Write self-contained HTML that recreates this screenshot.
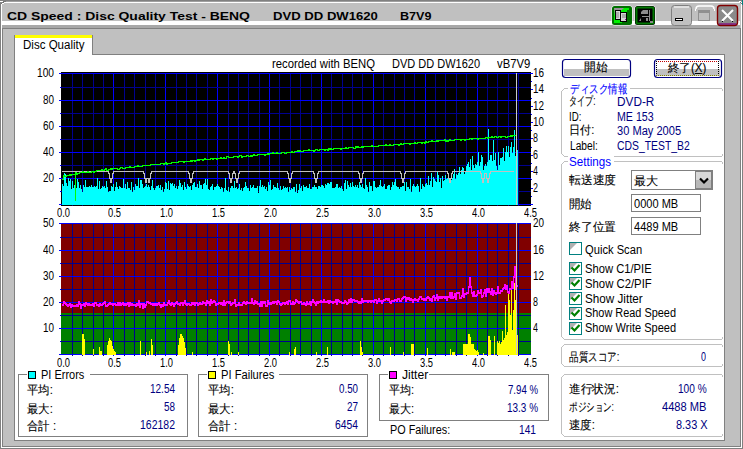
<!DOCTYPE html>
<html><head><meta charset="utf-8"><style>
html,body{margin:0;padding:0;width:743px;height:449px;overflow:hidden;background:#c0c0c0}
#s{position:absolute;left:0;top:0}
.j{-webkit-text-stroke:0.12px}
.t{position:absolute;white-space:pre;line-height:1;font-family:"Liberation Sans",sans-serif;transform-origin:0 0}
</style></head><body>
<svg id="s" width="743" height="449" viewBox="0 0 743 449" shape-rendering="crispEdges">
<rect x="0" y="0" width="743" height="449" fill="#c0c0c0"/><rect x="0" y="0" width="743" height="1" fill="#808080"/><rect x="0" y="1" width="743" height="1" fill="#a0a0a0"/><rect x="3" y="2" width="737" height="1" fill="#ffffff"/><rect x="0" y="0" width="1" height="449" fill="#808080"/><rect x="1" y="2" width="1" height="447" fill="#ffffff"/><rect x="742" y="0" width="1" height="449" fill="#808080"/><rect x="741" y="2" width="1" height="446" fill="#ffffff"/><rect x="0" y="448" width="743" height="1" fill="#808080"/><rect x="1" y="447" width="741" height="1" fill="#ffffff"/><rect x="0" y="1" width="3" height="1" fill="#ffffff"/><rect x="3" y="1" width="3" height="1" fill="#777777"/><rect x="0" y="2" width="2" height="1" fill="#888888"/><rect x="2" y="2" width="2" height="1" fill="#777777"/><rect x="4" y="2" width="3" height="1" fill="#ffffff"/><rect x="1" y="3" width="1" height="1" fill="#777777"/><rect x="2" y="3" width="2" height="1" fill="#ffffff"/><rect x="742" y="0" width="1" height="5" fill="#008080"/><rect x="739" y="1" width="2" height="1" fill="#ffffff"/><rect x="740" y="2" width="1" height="1" fill="#777777"/><rect x="741" y="3" width="1" height="1" fill="#777777"/><rect x="2" y="21" width="738" height="4" fill="#ffffff"/><rect x="2" y="25" width="738" height="3" fill="#a8a8a8"/><rect x="2" y="28" width="738" height="1" fill="#808080"/><rect x="2" y="28" width="1" height="419" fill="#808080"/><rect x="740" y="28" width="1" height="419" fill="#808080"/><rect x="2" y="446" width="739" height="1" fill="#808080"/><rect x="14" y="54" width="711" height="387" fill="#808080"/><rect x="15" y="55" width="709" height="385" fill="#ffffff"/><rect x="14" y="35" width="79" height="20" fill="#808080"/><rect x="15" y="38" width="77" height="17" fill="#ffffff"/><rect x="15" y="35" width="77" height="3" fill="#ffff00"/><rect x="61" y="72" width="470" height="134" fill="#000000"/><rect x="72" y="73" width="1" height="133" fill="#000090"/><rect x="82" y="73" width="1" height="133" fill="#000090"/><rect x="93" y="73" width="1" height="133" fill="#000090"/><rect x="103" y="73" width="1" height="133" fill="#000090"/><rect x="113" y="73" width="1" height="133" fill="#0000ff"/><rect x="124" y="73" width="1" height="133" fill="#000090"/><rect x="134" y="73" width="1" height="133" fill="#000090"/><rect x="145" y="73" width="1" height="133" fill="#000090"/><rect x="155" y="73" width="1" height="133" fill="#000090"/><rect x="165" y="73" width="1" height="133" fill="#0000ff"/><rect x="176" y="73" width="1" height="133" fill="#000090"/><rect x="186" y="73" width="1" height="133" fill="#000090"/><rect x="196" y="73" width="1" height="133" fill="#000090"/><rect x="207" y="73" width="1" height="133" fill="#000090"/><rect x="217" y="73" width="1" height="133" fill="#0000ff"/><rect x="228" y="73" width="1" height="133" fill="#000090"/><rect x="238" y="73" width="1" height="133" fill="#000090"/><rect x="248" y="73" width="1" height="133" fill="#000090"/><rect x="259" y="73" width="1" height="133" fill="#000090"/><rect x="269" y="73" width="1" height="133" fill="#0000ff"/><rect x="279" y="73" width="1" height="133" fill="#000090"/><rect x="290" y="73" width="1" height="133" fill="#000090"/><rect x="300" y="73" width="1" height="133" fill="#000090"/><rect x="311" y="73" width="1" height="133" fill="#000090"/><rect x="321" y="73" width="1" height="133" fill="#0000ff"/><rect x="331" y="73" width="1" height="133" fill="#000090"/><rect x="342" y="73" width="1" height="133" fill="#000090"/><rect x="352" y="73" width="1" height="133" fill="#000090"/><rect x="362" y="73" width="1" height="133" fill="#000090"/><rect x="373" y="73" width="1" height="133" fill="#0000ff"/><rect x="383" y="73" width="1" height="133" fill="#000090"/><rect x="394" y="73" width="1" height="133" fill="#000090"/><rect x="404" y="73" width="1" height="133" fill="#000090"/><rect x="414" y="73" width="1" height="133" fill="#000090"/><rect x="425" y="73" width="1" height="133" fill="#0000ff"/><rect x="435" y="73" width="1" height="133" fill="#000090"/><rect x="445" y="73" width="1" height="133" fill="#000090"/><rect x="456" y="73" width="1" height="133" fill="#000090"/><rect x="466" y="73" width="1" height="133" fill="#000090"/><rect x="477" y="73" width="1" height="133" fill="#0000ff"/><rect x="487" y="73" width="1" height="133" fill="#000090"/><rect x="497" y="73" width="1" height="133" fill="#000090"/><rect x="508" y="73" width="1" height="133" fill="#000090"/><rect x="518" y="73" width="1" height="133" fill="#000090"/><rect x="61" y="73" width="470" height="1" fill="#0000ff"/><rect x="61" y="87" width="470" height="1" fill="#000090"/><rect x="61" y="100" width="470" height="1" fill="#0000ff"/><rect x="61" y="113" width="470" height="1" fill="#000090"/><rect x="61" y="126" width="470" height="1" fill="#0000ff"/><rect x="61" y="139" width="470" height="1" fill="#000090"/><rect x="61" y="152" width="470" height="1" fill="#0000ff"/><rect x="61" y="165" width="470" height="1" fill="#000090"/><rect x="61" y="178" width="470" height="1" fill="#0000ff"/><rect x="61" y="191" width="470" height="1" fill="#000090"/><rect x="61" y="204" width="470" height="1" fill="#0000ff"/><rect x="59" y="73" width="2" height="1" fill="#0000ff"/><rect x="60" y="87" width="1" height="1" fill="#0000ff"/><rect x="59" y="100" width="2" height="1" fill="#0000ff"/><rect x="60" y="113" width="1" height="1" fill="#0000ff"/><rect x="59" y="126" width="2" height="1" fill="#0000ff"/><rect x="60" y="139" width="1" height="1" fill="#0000ff"/><rect x="59" y="152" width="2" height="1" fill="#0000ff"/><rect x="60" y="165" width="1" height="1" fill="#0000ff"/><rect x="59" y="178" width="2" height="1" fill="#0000ff"/><rect x="60" y="191" width="1" height="1" fill="#0000ff"/><rect x="59" y="204" width="2" height="1" fill="#0000ff"/><rect x="531" y="204" width="2" height="1" fill="#0000ff"/><rect x="531" y="196" width="1" height="1" fill="#0000ff"/><rect x="531" y="188" width="2" height="1" fill="#0000ff"/><rect x="531" y="179" width="1" height="1" fill="#0000ff"/><rect x="531" y="171" width="2" height="1" fill="#0000ff"/><rect x="531" y="163" width="1" height="1" fill="#0000ff"/><rect x="531" y="155" width="2" height="1" fill="#0000ff"/><rect x="531" y="147" width="1" height="1" fill="#0000ff"/><rect x="531" y="138" width="2" height="1" fill="#0000ff"/><rect x="531" y="130" width="1" height="1" fill="#0000ff"/><rect x="531" y="122" width="2" height="1" fill="#0000ff"/><rect x="531" y="114" width="1" height="1" fill="#0000ff"/><rect x="531" y="106" width="2" height="1" fill="#0000ff"/><rect x="531" y="98" width="1" height="1" fill="#0000ff"/><rect x="531" y="89" width="2" height="1" fill="#0000ff"/><rect x="531" y="81" width="1" height="1" fill="#0000ff"/><rect x="531" y="73" width="2" height="1" fill="#0000ff"/><rect x="62" y="184" width="1" height="21" fill="#00ffff"/><rect x="63" y="186" width="1" height="19" fill="#00ffff"/><rect x="64" y="173" width="1" height="32" fill="#00ffff"/><rect x="65" y="174" width="1" height="31" fill="#00ffff"/><rect x="66" y="183" width="1" height="22" fill="#00ffff"/><rect x="67" y="186" width="1" height="19" fill="#00ffff"/><rect x="68" y="178" width="1" height="27" fill="#00ffff"/><rect x="69" y="181" width="1" height="24" fill="#00ffff"/><rect x="70" y="179" width="1" height="26" fill="#00ffff"/><rect x="71" y="189" width="1" height="16" fill="#00ffff"/><rect x="72" y="181" width="1" height="24" fill="#00ffff"/><rect x="73" y="188" width="1" height="17" fill="#00ffff"/><rect x="74" y="185" width="1" height="20" fill="#00ffff"/><rect x="75" y="189" width="1" height="16" fill="#00ffff"/><rect x="76" y="188" width="1" height="17" fill="#00ffff"/><rect x="77" y="179" width="1" height="26" fill="#00ffff"/><rect x="78" y="182" width="1" height="23" fill="#00ffff"/><rect x="79" y="188" width="1" height="17" fill="#00ffff"/><rect x="80" y="185" width="1" height="20" fill="#00ffff"/><rect x="81" y="189" width="1" height="16" fill="#00ffff"/><rect x="82" y="192" width="1" height="13" fill="#00ffff"/><rect x="83" y="185" width="1" height="20" fill="#00ffff"/><rect x="84" y="187" width="1" height="18" fill="#00ffff"/><rect x="85" y="180" width="1" height="25" fill="#00ffff"/><rect x="86" y="187" width="1" height="18" fill="#00ffff"/><rect x="87" y="187" width="1" height="18" fill="#00ffff"/><rect x="88" y="187" width="1" height="18" fill="#00ffff"/><rect x="89" y="186" width="1" height="19" fill="#00ffff"/><rect x="90" y="187" width="1" height="18" fill="#00ffff"/><rect x="91" y="185" width="1" height="20" fill="#00ffff"/><rect x="92" y="187" width="1" height="18" fill="#00ffff"/><rect x="93" y="187" width="1" height="18" fill="#00ffff"/><rect x="94" y="186" width="1" height="19" fill="#00ffff"/><rect x="95" y="187" width="1" height="18" fill="#00ffff"/><rect x="96" y="186" width="1" height="19" fill="#00ffff"/><rect x="97" y="178" width="1" height="27" fill="#00ffff"/><rect x="98" y="189" width="1" height="16" fill="#00ffff"/><rect x="99" y="181" width="1" height="24" fill="#00ffff"/><rect x="100" y="189" width="1" height="16" fill="#00ffff"/><rect x="101" y="188" width="1" height="17" fill="#00ffff"/><rect x="102" y="186" width="1" height="19" fill="#00ffff"/><rect x="103" y="187" width="1" height="18" fill="#00ffff"/><rect x="104" y="186" width="1" height="19" fill="#00ffff"/><rect x="105" y="188" width="1" height="17" fill="#00ffff"/><rect x="106" y="181" width="1" height="24" fill="#00ffff"/><rect x="107" y="187" width="1" height="18" fill="#00ffff"/><rect x="108" y="192" width="1" height="13" fill="#00ffff"/><rect x="109" y="191" width="1" height="14" fill="#00ffff"/><rect x="110" y="191" width="1" height="14" fill="#00ffff"/><rect x="111" y="186" width="1" height="19" fill="#00ffff"/><rect x="112" y="187" width="1" height="18" fill="#00ffff"/><rect x="113" y="184" width="1" height="21" fill="#00ffff"/><rect x="114" y="191" width="1" height="14" fill="#00ffff"/><rect x="115" y="187" width="1" height="18" fill="#00ffff"/><rect x="116" y="182" width="1" height="23" fill="#00ffff"/><rect x="117" y="187" width="1" height="18" fill="#00ffff"/><rect x="118" y="189" width="1" height="16" fill="#00ffff"/><rect x="119" y="186" width="1" height="19" fill="#00ffff"/><rect x="120" y="187" width="1" height="18" fill="#00ffff"/><rect x="121" y="188" width="1" height="17" fill="#00ffff"/><rect x="122" y="188" width="1" height="17" fill="#00ffff"/><rect x="123" y="179" width="1" height="26" fill="#00ffff"/><rect x="124" y="188" width="1" height="17" fill="#00ffff"/><rect x="125" y="184" width="1" height="21" fill="#00ffff"/><rect x="126" y="189" width="1" height="16" fill="#00ffff"/><rect x="127" y="182" width="1" height="23" fill="#00ffff"/><rect x="128" y="188" width="1" height="17" fill="#00ffff"/><rect x="129" y="188" width="1" height="17" fill="#00ffff"/><rect x="130" y="190" width="1" height="15" fill="#00ffff"/><rect x="131" y="182" width="1" height="23" fill="#00ffff"/><rect x="132" y="192" width="1" height="13" fill="#00ffff"/><rect x="133" y="187" width="1" height="18" fill="#00ffff"/><rect x="134" y="190" width="1" height="15" fill="#00ffff"/><rect x="135" y="184" width="1" height="21" fill="#00ffff"/><rect x="136" y="186" width="1" height="19" fill="#00ffff"/><rect x="137" y="186" width="1" height="19" fill="#00ffff"/><rect x="138" y="178" width="1" height="27" fill="#00ffff"/><rect x="139" y="188" width="1" height="17" fill="#00ffff"/><rect x="140" y="180" width="1" height="25" fill="#00ffff"/><rect x="141" y="180" width="1" height="25" fill="#00ffff"/><rect x="142" y="184" width="1" height="21" fill="#00ffff"/><rect x="143" y="188" width="1" height="17" fill="#00ffff"/><rect x="144" y="187" width="1" height="18" fill="#00ffff"/><rect x="145" y="186" width="1" height="19" fill="#00ffff"/><rect x="146" y="184" width="1" height="21" fill="#00ffff"/><rect x="147" y="187" width="1" height="18" fill="#00ffff"/><rect x="148" y="185" width="1" height="20" fill="#00ffff"/><rect x="149" y="187" width="1" height="18" fill="#00ffff"/><rect x="150" y="190" width="1" height="15" fill="#00ffff"/><rect x="151" y="186" width="1" height="19" fill="#00ffff"/><rect x="152" y="180" width="1" height="25" fill="#00ffff"/><rect x="153" y="188" width="1" height="17" fill="#00ffff"/><rect x="154" y="190" width="1" height="15" fill="#00ffff"/><rect x="155" y="188" width="1" height="17" fill="#00ffff"/><rect x="156" y="186" width="1" height="19" fill="#00ffff"/><rect x="157" y="186" width="1" height="19" fill="#00ffff"/><rect x="158" y="185" width="1" height="20" fill="#00ffff"/><rect x="159" y="188" width="1" height="17" fill="#00ffff"/><rect x="160" y="185" width="1" height="20" fill="#00ffff"/><rect x="161" y="190" width="1" height="15" fill="#00ffff"/><rect x="162" y="187" width="1" height="18" fill="#00ffff"/><rect x="163" y="192" width="1" height="13" fill="#00ffff"/><rect x="164" y="189" width="1" height="16" fill="#00ffff"/><rect x="165" y="182" width="1" height="23" fill="#00ffff"/><rect x="166" y="183" width="1" height="22" fill="#00ffff"/><rect x="167" y="189" width="1" height="16" fill="#00ffff"/><rect x="168" y="181" width="1" height="24" fill="#00ffff"/><rect x="169" y="190" width="1" height="15" fill="#00ffff"/><rect x="170" y="183" width="1" height="22" fill="#00ffff"/><rect x="171" y="184" width="1" height="21" fill="#00ffff"/><rect x="172" y="183" width="1" height="22" fill="#00ffff"/><rect x="173" y="186" width="1" height="19" fill="#00ffff"/><rect x="174" y="184" width="1" height="21" fill="#00ffff"/><rect x="175" y="188" width="1" height="17" fill="#00ffff"/><rect x="176" y="186" width="1" height="19" fill="#00ffff"/><rect x="177" y="189" width="1" height="16" fill="#00ffff"/><rect x="178" y="186" width="1" height="19" fill="#00ffff"/><rect x="179" y="180" width="1" height="25" fill="#00ffff"/><rect x="180" y="183" width="1" height="22" fill="#00ffff"/><rect x="181" y="187" width="1" height="18" fill="#00ffff"/><rect x="182" y="185" width="1" height="20" fill="#00ffff"/><rect x="183" y="190" width="1" height="15" fill="#00ffff"/><rect x="184" y="182" width="1" height="23" fill="#00ffff"/><rect x="185" y="187" width="1" height="18" fill="#00ffff"/><rect x="186" y="189" width="1" height="16" fill="#00ffff"/><rect x="187" y="184" width="1" height="21" fill="#00ffff"/><rect x="188" y="186" width="1" height="19" fill="#00ffff"/><rect x="189" y="187" width="1" height="18" fill="#00ffff"/><rect x="190" y="186" width="1" height="19" fill="#00ffff"/><rect x="191" y="190" width="1" height="15" fill="#00ffff"/><rect x="192" y="185" width="1" height="20" fill="#00ffff"/><rect x="193" y="183" width="1" height="22" fill="#00ffff"/><rect x="194" y="182" width="1" height="23" fill="#00ffff"/><rect x="195" y="187" width="1" height="18" fill="#00ffff"/><rect x="196" y="187" width="1" height="18" fill="#00ffff"/><rect x="197" y="184" width="1" height="21" fill="#00ffff"/><rect x="198" y="188" width="1" height="17" fill="#00ffff"/><rect x="199" y="181" width="1" height="24" fill="#00ffff"/><rect x="200" y="185" width="1" height="20" fill="#00ffff"/><rect x="201" y="185" width="1" height="20" fill="#00ffff"/><rect x="202" y="189" width="1" height="16" fill="#00ffff"/><rect x="203" y="184" width="1" height="21" fill="#00ffff"/><rect x="204" y="183" width="1" height="22" fill="#00ffff"/><rect x="205" y="179" width="1" height="26" fill="#00ffff"/><rect x="206" y="185" width="1" height="20" fill="#00ffff"/><rect x="207" y="179" width="1" height="26" fill="#00ffff"/><rect x="208" y="189" width="1" height="16" fill="#00ffff"/><rect x="209" y="190" width="1" height="15" fill="#00ffff"/><rect x="210" y="187" width="1" height="18" fill="#00ffff"/><rect x="211" y="186" width="1" height="19" fill="#00ffff"/><rect x="212" y="184" width="1" height="21" fill="#00ffff"/><rect x="213" y="190" width="1" height="15" fill="#00ffff"/><rect x="214" y="187" width="1" height="18" fill="#00ffff"/><rect x="215" y="187" width="1" height="18" fill="#00ffff"/><rect x="216" y="186" width="1" height="19" fill="#00ffff"/><rect x="217" y="184" width="1" height="21" fill="#00ffff"/><rect x="218" y="186" width="1" height="19" fill="#00ffff"/><rect x="219" y="187" width="1" height="18" fill="#00ffff"/><rect x="220" y="189" width="1" height="16" fill="#00ffff"/><rect x="221" y="187" width="1" height="18" fill="#00ffff"/><rect x="222" y="188" width="1" height="17" fill="#00ffff"/><rect x="223" y="192" width="1" height="13" fill="#00ffff"/><rect x="224" y="188" width="1" height="17" fill="#00ffff"/><rect x="225" y="178" width="1" height="27" fill="#00ffff"/><rect x="226" y="190" width="1" height="15" fill="#00ffff"/><rect x="227" y="191" width="1" height="14" fill="#00ffff"/><rect x="228" y="187" width="1" height="18" fill="#00ffff"/><rect x="229" y="192" width="1" height="13" fill="#00ffff"/><rect x="230" y="188" width="1" height="17" fill="#00ffff"/><rect x="231" y="186" width="1" height="19" fill="#00ffff"/><rect x="232" y="186" width="1" height="19" fill="#00ffff"/><rect x="233" y="188" width="1" height="17" fill="#00ffff"/><rect x="234" y="181" width="1" height="24" fill="#00ffff"/><rect x="235" y="188" width="1" height="17" fill="#00ffff"/><rect x="236" y="187" width="1" height="18" fill="#00ffff"/><rect x="237" y="189" width="1" height="16" fill="#00ffff"/><rect x="238" y="188" width="1" height="17" fill="#00ffff"/><rect x="239" y="184" width="1" height="21" fill="#00ffff"/><rect x="240" y="190" width="1" height="15" fill="#00ffff"/><rect x="241" y="188" width="1" height="17" fill="#00ffff"/><rect x="242" y="191" width="1" height="14" fill="#00ffff"/><rect x="243" y="188" width="1" height="17" fill="#00ffff"/><rect x="244" y="187" width="1" height="18" fill="#00ffff"/><rect x="245" y="182" width="1" height="23" fill="#00ffff"/><rect x="246" y="186" width="1" height="19" fill="#00ffff"/><rect x="247" y="188" width="1" height="17" fill="#00ffff"/><rect x="248" y="188" width="1" height="17" fill="#00ffff"/><rect x="249" y="191" width="1" height="14" fill="#00ffff"/><rect x="250" y="185" width="1" height="20" fill="#00ffff"/><rect x="251" y="188" width="1" height="17" fill="#00ffff"/><rect x="252" y="187" width="1" height="18" fill="#00ffff"/><rect x="253" y="185" width="1" height="20" fill="#00ffff"/><rect x="254" y="188" width="1" height="17" fill="#00ffff"/><rect x="255" y="188" width="1" height="17" fill="#00ffff"/><rect x="256" y="188" width="1" height="17" fill="#00ffff"/><rect x="257" y="186" width="1" height="19" fill="#00ffff"/><rect x="258" y="193" width="1" height="12" fill="#00ffff"/><rect x="259" y="186" width="1" height="19" fill="#00ffff"/><rect x="260" y="180" width="1" height="25" fill="#00ffff"/><rect x="261" y="187" width="1" height="18" fill="#00ffff"/><rect x="262" y="185" width="1" height="20" fill="#00ffff"/><rect x="263" y="187" width="1" height="18" fill="#00ffff"/><rect x="264" y="186" width="1" height="19" fill="#00ffff"/><rect x="265" y="189" width="1" height="16" fill="#00ffff"/><rect x="266" y="187" width="1" height="18" fill="#00ffff"/><rect x="267" y="191" width="1" height="14" fill="#00ffff"/><rect x="268" y="182" width="1" height="23" fill="#00ffff"/><rect x="269" y="185" width="1" height="20" fill="#00ffff"/><rect x="270" y="180" width="1" height="25" fill="#00ffff"/><rect x="271" y="190" width="1" height="15" fill="#00ffff"/><rect x="272" y="189" width="1" height="16" fill="#00ffff"/><rect x="273" y="185" width="1" height="20" fill="#00ffff"/><rect x="274" y="187" width="1" height="18" fill="#00ffff"/><rect x="275" y="187" width="1" height="18" fill="#00ffff"/><rect x="276" y="188" width="1" height="17" fill="#00ffff"/><rect x="277" y="183" width="1" height="22" fill="#00ffff"/><rect x="278" y="188" width="1" height="17" fill="#00ffff"/><rect x="279" y="190" width="1" height="15" fill="#00ffff"/><rect x="280" y="186" width="1" height="19" fill="#00ffff"/><rect x="281" y="190" width="1" height="15" fill="#00ffff"/><rect x="282" y="189" width="1" height="16" fill="#00ffff"/><rect x="283" y="186" width="1" height="19" fill="#00ffff"/><rect x="284" y="188" width="1" height="17" fill="#00ffff"/><rect x="285" y="187" width="1" height="18" fill="#00ffff"/><rect x="286" y="188" width="1" height="17" fill="#00ffff"/><rect x="287" y="187" width="1" height="18" fill="#00ffff"/><rect x="288" y="192" width="1" height="13" fill="#00ffff"/><rect x="289" y="187" width="1" height="18" fill="#00ffff"/><rect x="290" y="190" width="1" height="15" fill="#00ffff"/><rect x="291" y="188" width="1" height="17" fill="#00ffff"/><rect x="292" y="189" width="1" height="16" fill="#00ffff"/><rect x="293" y="187" width="1" height="18" fill="#00ffff"/><rect x="294" y="187" width="1" height="18" fill="#00ffff"/><rect x="295" y="192" width="1" height="13" fill="#00ffff"/><rect x="296" y="184" width="1" height="21" fill="#00ffff"/><rect x="297" y="193" width="1" height="12" fill="#00ffff"/><rect x="298" y="190" width="1" height="15" fill="#00ffff"/><rect x="299" y="184" width="1" height="21" fill="#00ffff"/><rect x="300" y="188" width="1" height="17" fill="#00ffff"/><rect x="301" y="186" width="1" height="19" fill="#00ffff"/><rect x="302" y="191" width="1" height="14" fill="#00ffff"/><rect x="303" y="185" width="1" height="20" fill="#00ffff"/><rect x="304" y="187" width="1" height="18" fill="#00ffff"/><rect x="305" y="187" width="1" height="18" fill="#00ffff"/><rect x="306" y="186" width="1" height="19" fill="#00ffff"/><rect x="307" y="188" width="1" height="17" fill="#00ffff"/><rect x="308" y="188" width="1" height="17" fill="#00ffff"/><rect x="309" y="184" width="1" height="21" fill="#00ffff"/><rect x="310" y="189" width="1" height="16" fill="#00ffff"/><rect x="311" y="189" width="1" height="16" fill="#00ffff"/><rect x="312" y="187" width="1" height="18" fill="#00ffff"/><rect x="313" y="187" width="1" height="18" fill="#00ffff"/><rect x="314" y="185" width="1" height="20" fill="#00ffff"/><rect x="315" y="187" width="1" height="18" fill="#00ffff"/><rect x="316" y="187" width="1" height="18" fill="#00ffff"/><rect x="317" y="189" width="1" height="16" fill="#00ffff"/><rect x="318" y="186" width="1" height="19" fill="#00ffff"/><rect x="319" y="186" width="1" height="19" fill="#00ffff"/><rect x="320" y="187" width="1" height="18" fill="#00ffff"/><rect x="321" y="185" width="1" height="20" fill="#00ffff"/><rect x="322" y="185" width="1" height="20" fill="#00ffff"/><rect x="323" y="186" width="1" height="19" fill="#00ffff"/><rect x="324" y="188" width="1" height="17" fill="#00ffff"/><rect x="325" y="184" width="1" height="21" fill="#00ffff"/><rect x="326" y="185" width="1" height="20" fill="#00ffff"/><rect x="327" y="183" width="1" height="22" fill="#00ffff"/><rect x="328" y="183" width="1" height="22" fill="#00ffff"/><rect x="329" y="184" width="1" height="21" fill="#00ffff"/><rect x="330" y="182" width="1" height="23" fill="#00ffff"/><rect x="331" y="182" width="1" height="23" fill="#00ffff"/><rect x="332" y="188" width="1" height="17" fill="#00ffff"/><rect x="333" y="188" width="1" height="17" fill="#00ffff"/><rect x="334" y="188" width="1" height="17" fill="#00ffff"/><rect x="335" y="187" width="1" height="18" fill="#00ffff"/><rect x="336" y="184" width="1" height="21" fill="#00ffff"/><rect x="337" y="184" width="1" height="21" fill="#00ffff"/><rect x="338" y="188" width="1" height="17" fill="#00ffff"/><rect x="339" y="187" width="1" height="18" fill="#00ffff"/><rect x="340" y="188" width="1" height="17" fill="#00ffff"/><rect x="341" y="186" width="1" height="19" fill="#00ffff"/><rect x="342" y="189" width="1" height="16" fill="#00ffff"/><rect x="343" y="191" width="1" height="14" fill="#00ffff"/><rect x="344" y="183" width="1" height="22" fill="#00ffff"/><rect x="345" y="180" width="1" height="25" fill="#00ffff"/><rect x="346" y="189" width="1" height="16" fill="#00ffff"/><rect x="347" y="181" width="1" height="24" fill="#00ffff"/><rect x="348" y="185" width="1" height="20" fill="#00ffff"/><rect x="349" y="187" width="1" height="18" fill="#00ffff"/><rect x="350" y="183" width="1" height="22" fill="#00ffff"/><rect x="351" y="187" width="1" height="18" fill="#00ffff"/><rect x="352" y="182" width="1" height="23" fill="#00ffff"/><rect x="353" y="186" width="1" height="19" fill="#00ffff"/><rect x="354" y="187" width="1" height="18" fill="#00ffff"/><rect x="355" y="185" width="1" height="20" fill="#00ffff"/><rect x="356" y="187" width="1" height="18" fill="#00ffff"/><rect x="357" y="185" width="1" height="20" fill="#00ffff"/><rect x="358" y="188" width="1" height="17" fill="#00ffff"/><rect x="359" y="182" width="1" height="23" fill="#00ffff"/><rect x="360" y="185" width="1" height="20" fill="#00ffff"/><rect x="361" y="187" width="1" height="18" fill="#00ffff"/><rect x="362" y="184" width="1" height="21" fill="#00ffff"/><rect x="363" y="188" width="1" height="17" fill="#00ffff"/><rect x="364" y="189" width="1" height="16" fill="#00ffff"/><rect x="365" y="178" width="1" height="27" fill="#00ffff"/><rect x="366" y="185" width="1" height="20" fill="#00ffff"/><rect x="367" y="187" width="1" height="18" fill="#00ffff"/><rect x="368" y="192" width="1" height="13" fill="#00ffff"/><rect x="369" y="182" width="1" height="23" fill="#00ffff"/><rect x="370" y="186" width="1" height="19" fill="#00ffff"/><rect x="371" y="186" width="1" height="19" fill="#00ffff"/><rect x="372" y="191" width="1" height="14" fill="#00ffff"/><rect x="373" y="181" width="1" height="24" fill="#00ffff"/><rect x="374" y="181" width="1" height="24" fill="#00ffff"/><rect x="375" y="187" width="1" height="18" fill="#00ffff"/><rect x="376" y="188" width="1" height="17" fill="#00ffff"/><rect x="377" y="187" width="1" height="18" fill="#00ffff"/><rect x="378" y="187" width="1" height="18" fill="#00ffff"/><rect x="379" y="185" width="1" height="20" fill="#00ffff"/><rect x="380" y="180" width="1" height="25" fill="#00ffff"/><rect x="381" y="186" width="1" height="19" fill="#00ffff"/><rect x="382" y="187" width="1" height="18" fill="#00ffff"/><rect x="383" y="186" width="1" height="19" fill="#00ffff"/><rect x="384" y="184" width="1" height="21" fill="#00ffff"/><rect x="385" y="189" width="1" height="16" fill="#00ffff"/><rect x="386" y="189" width="1" height="16" fill="#00ffff"/><rect x="387" y="186" width="1" height="19" fill="#00ffff"/><rect x="388" y="185" width="1" height="20" fill="#00ffff"/><rect x="389" y="185" width="1" height="20" fill="#00ffff"/><rect x="390" y="190" width="1" height="15" fill="#00ffff"/><rect x="391" y="187" width="1" height="18" fill="#00ffff"/><rect x="392" y="182" width="1" height="23" fill="#00ffff"/><rect x="393" y="185" width="1" height="20" fill="#00ffff"/><rect x="394" y="182" width="1" height="23" fill="#00ffff"/><rect x="395" y="179" width="1" height="26" fill="#00ffff"/><rect x="396" y="186" width="1" height="19" fill="#00ffff"/><rect x="397" y="187" width="1" height="18" fill="#00ffff"/><rect x="398" y="187" width="1" height="18" fill="#00ffff"/><rect x="399" y="189" width="1" height="16" fill="#00ffff"/><rect x="400" y="187" width="1" height="18" fill="#00ffff"/><rect x="401" y="187" width="1" height="18" fill="#00ffff"/><rect x="402" y="186" width="1" height="19" fill="#00ffff"/><rect x="403" y="186" width="1" height="19" fill="#00ffff"/><rect x="404" y="182" width="1" height="23" fill="#00ffff"/><rect x="405" y="191" width="1" height="14" fill="#00ffff"/><rect x="406" y="182" width="1" height="23" fill="#00ffff"/><rect x="407" y="187" width="1" height="18" fill="#00ffff"/><rect x="408" y="187" width="1" height="18" fill="#00ffff"/><rect x="409" y="189" width="1" height="16" fill="#00ffff"/><rect x="410" y="179" width="1" height="26" fill="#00ffff"/><rect x="411" y="192" width="1" height="13" fill="#00ffff"/><rect x="412" y="186" width="1" height="19" fill="#00ffff"/><rect x="413" y="184" width="1" height="21" fill="#00ffff"/><rect x="414" y="186" width="1" height="19" fill="#00ffff"/><rect x="415" y="187" width="1" height="18" fill="#00ffff"/><rect x="416" y="186" width="1" height="19" fill="#00ffff"/><rect x="417" y="184" width="1" height="21" fill="#00ffff"/><rect x="418" y="186" width="1" height="19" fill="#00ffff"/><rect x="419" y="192" width="1" height="13" fill="#00ffff"/><rect x="420" y="178" width="1" height="27" fill="#00ffff"/><rect x="421" y="189" width="1" height="16" fill="#00ffff"/><rect x="422" y="184" width="1" height="21" fill="#00ffff"/><rect x="423" y="186" width="1" height="19" fill="#00ffff"/><rect x="424" y="187" width="1" height="18" fill="#00ffff"/><rect x="425" y="184" width="1" height="21" fill="#00ffff"/><rect x="426" y="183" width="1" height="22" fill="#00ffff"/><rect x="427" y="185" width="1" height="20" fill="#00ffff"/><rect x="428" y="176" width="1" height="29" fill="#00ffff"/><rect x="429" y="185" width="1" height="20" fill="#00ffff"/><rect x="430" y="181" width="1" height="24" fill="#00ffff"/><rect x="431" y="173" width="1" height="32" fill="#00ffff"/><rect x="432" y="187" width="1" height="18" fill="#00ffff"/><rect x="433" y="177" width="1" height="28" fill="#00ffff"/><rect x="434" y="179" width="1" height="26" fill="#00ffff"/><rect x="435" y="181" width="1" height="24" fill="#00ffff"/><rect x="436" y="182" width="1" height="23" fill="#00ffff"/><rect x="437" y="172" width="1" height="33" fill="#00ffff"/><rect x="438" y="175" width="1" height="30" fill="#00ffff"/><rect x="439" y="182" width="1" height="23" fill="#00ffff"/><rect x="440" y="178" width="1" height="27" fill="#00ffff"/><rect x="441" y="188" width="1" height="17" fill="#00ffff"/><rect x="442" y="176" width="1" height="29" fill="#00ffff"/><rect x="443" y="181" width="1" height="24" fill="#00ffff"/><rect x="444" y="180" width="1" height="25" fill="#00ffff"/><rect x="445" y="175" width="1" height="30" fill="#00ffff"/><rect x="446" y="179" width="1" height="26" fill="#00ffff"/><rect x="447" y="178" width="1" height="27" fill="#00ffff"/><rect x="448" y="176" width="1" height="29" fill="#00ffff"/><rect x="449" y="178" width="1" height="27" fill="#00ffff"/><rect x="450" y="178" width="1" height="27" fill="#00ffff"/><rect x="451" y="180" width="1" height="25" fill="#00ffff"/><rect x="452" y="178" width="1" height="27" fill="#00ffff"/><rect x="453" y="174" width="1" height="31" fill="#00ffff"/><rect x="454" y="169" width="1" height="36" fill="#00ffff"/><rect x="455" y="179" width="1" height="26" fill="#00ffff"/><rect x="456" y="174" width="1" height="31" fill="#00ffff"/><rect x="457" y="175" width="1" height="30" fill="#00ffff"/><rect x="458" y="173" width="1" height="32" fill="#00ffff"/><rect x="459" y="167" width="1" height="38" fill="#00ffff"/><rect x="460" y="174" width="1" height="31" fill="#00ffff"/><rect x="461" y="170" width="1" height="35" fill="#00ffff"/><rect x="462" y="167" width="1" height="38" fill="#00ffff"/><rect x="463" y="168" width="1" height="37" fill="#00ffff"/><rect x="464" y="174" width="1" height="31" fill="#00ffff"/><rect x="465" y="172" width="1" height="33" fill="#00ffff"/><rect x="466" y="166" width="1" height="39" fill="#00ffff"/><rect x="467" y="164" width="1" height="41" fill="#00ffff"/><rect x="468" y="162" width="1" height="43" fill="#00ffff"/><rect x="469" y="167" width="1" height="38" fill="#00ffff"/><rect x="470" y="159" width="1" height="46" fill="#00ffff"/><rect x="471" y="170" width="1" height="35" fill="#00ffff"/><rect x="472" y="156" width="1" height="49" fill="#00ffff"/><rect x="473" y="165" width="1" height="40" fill="#00ffff"/><rect x="474" y="168" width="1" height="37" fill="#00ffff"/><rect x="475" y="164" width="1" height="41" fill="#00ffff"/><rect x="476" y="165" width="1" height="40" fill="#00ffff"/><rect x="477" y="162" width="1" height="43" fill="#00ffff"/><rect x="478" y="152" width="1" height="53" fill="#00ffff"/><rect x="479" y="166" width="1" height="39" fill="#00ffff"/><rect x="480" y="162" width="1" height="43" fill="#00ffff"/><rect x="481" y="155" width="1" height="50" fill="#00ffff"/><rect x="482" y="157" width="1" height="48" fill="#00ffff"/><rect x="483" y="170" width="1" height="35" fill="#00ffff"/><rect x="484" y="166" width="1" height="39" fill="#00ffff"/><rect x="485" y="164" width="1" height="41" fill="#00ffff"/><rect x="486" y="166" width="1" height="39" fill="#00ffff"/><rect x="487" y="162" width="1" height="43" fill="#00ffff"/><rect x="488" y="129" width="1" height="76" fill="#00ffff"/><rect x="489" y="160" width="1" height="45" fill="#00ffff"/><rect x="490" y="155" width="1" height="50" fill="#00ffff"/><rect x="491" y="155" width="1" height="50" fill="#00ffff"/><rect x="492" y="161" width="1" height="44" fill="#00ffff"/><rect x="493" y="140" width="1" height="65" fill="#00ffff"/><rect x="494" y="160" width="1" height="45" fill="#00ffff"/><rect x="495" y="153" width="1" height="52" fill="#00ffff"/><rect x="496" y="166" width="1" height="39" fill="#00ffff"/><rect x="497" y="170" width="1" height="35" fill="#00ffff"/><rect x="498" y="152" width="1" height="53" fill="#00ffff"/><rect x="499" y="165" width="1" height="40" fill="#00ffff"/><rect x="500" y="158" width="1" height="47" fill="#00ffff"/><rect x="501" y="158" width="1" height="47" fill="#00ffff"/><rect x="502" y="157" width="1" height="48" fill="#00ffff"/><rect x="503" y="148" width="1" height="57" fill="#00ffff"/><rect x="504" y="161" width="1" height="44" fill="#00ffff"/><rect x="505" y="152" width="1" height="53" fill="#00ffff"/><rect x="506" y="146" width="1" height="59" fill="#00ffff"/><rect x="507" y="152" width="1" height="53" fill="#00ffff"/><rect x="508" y="146" width="1" height="59" fill="#00ffff"/><rect x="509" y="157" width="1" height="48" fill="#00ffff"/><rect x="510" y="147" width="1" height="58" fill="#00ffff"/><rect x="511" y="142" width="1" height="63" fill="#00ffff"/><rect x="512" y="153" width="1" height="52" fill="#00ffff"/><rect x="513" y="147" width="1" height="58" fill="#00ffff"/><rect x="514" y="130" width="1" height="75" fill="#00ffff"/><rect x="515" y="156" width="1" height="49" fill="#00ffff"/><rect x="516" y="143" width="1" height="62" fill="#00ffff"/><rect x="517" y="150" width="1" height="55" fill="#00ffff"/><rect x="62" y="171" width="1" height="1" fill="#c0c0c0"/><rect x="63" y="171" width="1" height="1" fill="#c0c0c0"/><rect x="64" y="171" width="1" height="1" fill="#c0c0c0"/><rect x="65" y="171" width="1" height="1" fill="#c0c0c0"/><rect x="66" y="171" width="1" height="1" fill="#c0c0c0"/><rect x="67" y="171" width="1" height="1" fill="#c0c0c0"/><rect x="68" y="171" width="1" height="1" fill="#c0c0c0"/><rect x="69" y="171" width="1" height="1" fill="#c0c0c0"/><rect x="70" y="171" width="1" height="1" fill="#c0c0c0"/><rect x="71" y="171" width="1" height="1" fill="#c0c0c0"/><rect x="72" y="171" width="1" height="1" fill="#c0c0c0"/><rect x="73" y="171" width="1" height="1" fill="#c0c0c0"/><rect x="74" y="171" width="1" height="1" fill="#c0c0c0"/><rect x="75" y="171" width="1" height="1" fill="#c0c0c0"/><rect x="76" y="171" width="1" height="1" fill="#c0c0c0"/><rect x="77" y="171" width="1" height="1" fill="#c0c0c0"/><rect x="78" y="171" width="1" height="1" fill="#c0c0c0"/><rect x="79" y="171" width="1" height="1" fill="#c0c0c0"/><rect x="80" y="171" width="1" height="1" fill="#c0c0c0"/><rect x="81" y="171" width="1" height="1" fill="#c0c0c0"/><rect x="82" y="171" width="1" height="1" fill="#c0c0c0"/><rect x="83" y="171" width="1" height="1" fill="#c0c0c0"/><rect x="84" y="171" width="1" height="1" fill="#c0c0c0"/><rect x="85" y="171" width="1" height="1" fill="#c0c0c0"/><rect x="86" y="171" width="1" height="1" fill="#c0c0c0"/><rect x="87" y="171" width="1" height="1" fill="#c0c0c0"/><rect x="88" y="171" width="1" height="1" fill="#c0c0c0"/><rect x="89" y="171" width="1" height="1" fill="#c0c0c0"/><rect x="90" y="171" width="1" height="1" fill="#c0c0c0"/><rect x="91" y="171" width="1" height="1" fill="#c0c0c0"/><rect x="92" y="171" width="1" height="1" fill="#c0c0c0"/><rect x="93" y="171" width="1" height="1" fill="#c0c0c0"/><rect x="94" y="171" width="1" height="1" fill="#c0c0c0"/><rect x="95" y="171" width="1" height="1" fill="#c0c0c0"/><rect x="96" y="171" width="1" height="1" fill="#c0c0c0"/><rect x="97" y="171" width="1" height="1" fill="#c0c0c0"/><rect x="98" y="171" width="1" height="1" fill="#c0c0c0"/><rect x="99" y="171" width="1" height="1" fill="#c0c0c0"/><rect x="100" y="171" width="1" height="1" fill="#c0c0c0"/><rect x="101" y="171" width="1" height="1" fill="#c0c0c0"/><rect x="102" y="171" width="1" height="1" fill="#c0c0c0"/><rect x="103" y="171" width="1" height="1" fill="#c0c0c0"/><rect x="104" y="171" width="1" height="1" fill="#c0c0c0"/><rect x="105" y="171" width="1" height="1" fill="#c0c0c0"/><rect x="106" y="171" width="1" height="1" fill="#c0c0c0"/><rect x="107" y="171" width="1" height="1" fill="#c0c0c0"/><rect x="108" y="171" width="1" height="3" fill="#c0c0c0"/><rect x="109" y="173" width="1" height="6" fill="#c0c0c0"/><rect x="110" y="178" width="1" height="5" fill="#c0c0c0"/><rect x="111" y="178" width="1" height="5" fill="#c0c0c0"/><rect x="112" y="173" width="1" height="6" fill="#c0c0c0"/><rect x="113" y="171" width="1" height="3" fill="#c0c0c0"/><rect x="114" y="171" width="1" height="1" fill="#c0c0c0"/><rect x="115" y="171" width="1" height="1" fill="#c0c0c0"/><rect x="116" y="171" width="1" height="1" fill="#c0c0c0"/><rect x="117" y="171" width="1" height="1" fill="#c0c0c0"/><rect x="118" y="171" width="1" height="1" fill="#c0c0c0"/><rect x="119" y="171" width="1" height="1" fill="#c0c0c0"/><rect x="120" y="171" width="1" height="1" fill="#c0c0c0"/><rect x="121" y="171" width="1" height="1" fill="#c0c0c0"/><rect x="122" y="171" width="1" height="1" fill="#c0c0c0"/><rect x="123" y="171" width="1" height="1" fill="#c0c0c0"/><rect x="124" y="171" width="1" height="1" fill="#c0c0c0"/><rect x="125" y="171" width="1" height="1" fill="#c0c0c0"/><rect x="126" y="171" width="1" height="1" fill="#c0c0c0"/><rect x="127" y="171" width="1" height="1" fill="#c0c0c0"/><rect x="128" y="171" width="1" height="1" fill="#c0c0c0"/><rect x="129" y="171" width="1" height="1" fill="#c0c0c0"/><rect x="130" y="171" width="1" height="1" fill="#c0c0c0"/><rect x="131" y="171" width="1" height="1" fill="#c0c0c0"/><rect x="132" y="171" width="1" height="1" fill="#c0c0c0"/><rect x="133" y="171" width="1" height="1" fill="#c0c0c0"/><rect x="134" y="171" width="1" height="1" fill="#c0c0c0"/><rect x="135" y="171" width="1" height="1" fill="#c0c0c0"/><rect x="136" y="171" width="1" height="1" fill="#c0c0c0"/><rect x="137" y="171" width="1" height="1" fill="#c0c0c0"/><rect x="138" y="171" width="1" height="1" fill="#c0c0c0"/><rect x="139" y="171" width="1" height="1" fill="#c0c0c0"/><rect x="140" y="171" width="1" height="1" fill="#c0c0c0"/><rect x="141" y="171" width="1" height="1" fill="#c0c0c0"/><rect x="142" y="171" width="1" height="1" fill="#c0c0c0"/><rect x="143" y="171" width="1" height="3" fill="#c0c0c0"/><rect x="144" y="173" width="1" height="6" fill="#c0c0c0"/><rect x="145" y="178" width="1" height="5" fill="#c0c0c0"/><rect x="146" y="178" width="1" height="5" fill="#c0c0c0"/><rect x="147" y="178" width="1" height="1" fill="#c0c0c0"/><rect x="148" y="178" width="1" height="5" fill="#c0c0c0"/><rect x="149" y="178" width="1" height="5" fill="#c0c0c0"/><rect x="150" y="173" width="1" height="6" fill="#c0c0c0"/><rect x="151" y="171" width="1" height="3" fill="#c0c0c0"/><rect x="152" y="171" width="1" height="1" fill="#c0c0c0"/><rect x="153" y="171" width="1" height="1" fill="#c0c0c0"/><rect x="154" y="171" width="1" height="1" fill="#c0c0c0"/><rect x="155" y="171" width="1" height="1" fill="#c0c0c0"/><rect x="156" y="171" width="1" height="1" fill="#c0c0c0"/><rect x="157" y="171" width="1" height="1" fill="#c0c0c0"/><rect x="158" y="171" width="1" height="1" fill="#c0c0c0"/><rect x="159" y="171" width="1" height="1" fill="#c0c0c0"/><rect x="160" y="171" width="1" height="1" fill="#c0c0c0"/><rect x="161" y="171" width="1" height="1" fill="#c0c0c0"/><rect x="162" y="171" width="1" height="1" fill="#c0c0c0"/><rect x="163" y="171" width="1" height="1" fill="#c0c0c0"/><rect x="164" y="171" width="1" height="1" fill="#c0c0c0"/><rect x="165" y="171" width="1" height="1" fill="#c0c0c0"/><rect x="166" y="171" width="1" height="1" fill="#c0c0c0"/><rect x="167" y="171" width="1" height="1" fill="#c0c0c0"/><rect x="168" y="171" width="1" height="1" fill="#c0c0c0"/><rect x="169" y="171" width="1" height="1" fill="#c0c0c0"/><rect x="170" y="171" width="1" height="1" fill="#c0c0c0"/><rect x="171" y="171" width="1" height="1" fill="#c0c0c0"/><rect x="172" y="171" width="1" height="1" fill="#c0c0c0"/><rect x="173" y="171" width="1" height="1" fill="#c0c0c0"/><rect x="174" y="171" width="1" height="1" fill="#c0c0c0"/><rect x="175" y="171" width="1" height="1" fill="#c0c0c0"/><rect x="176" y="171" width="1" height="1" fill="#c0c0c0"/><rect x="177" y="171" width="1" height="1" fill="#c0c0c0"/><rect x="178" y="171" width="1" height="1" fill="#c0c0c0"/><rect x="179" y="171" width="1" height="1" fill="#c0c0c0"/><rect x="180" y="171" width="1" height="1" fill="#c0c0c0"/><rect x="181" y="171" width="1" height="1" fill="#c0c0c0"/><rect x="182" y="171" width="1" height="1" fill="#c0c0c0"/><rect x="183" y="171" width="1" height="1" fill="#c0c0c0"/><rect x="184" y="171" width="1" height="1" fill="#c0c0c0"/><rect x="185" y="171" width="1" height="1" fill="#c0c0c0"/><rect x="186" y="171" width="1" height="1" fill="#c0c0c0"/><rect x="187" y="171" width="1" height="1" fill="#c0c0c0"/><rect x="188" y="171" width="1" height="3" fill="#c0c0c0"/><rect x="189" y="173" width="1" height="6" fill="#c0c0c0"/><rect x="190" y="178" width="1" height="5" fill="#c0c0c0"/><rect x="191" y="178" width="1" height="5" fill="#c0c0c0"/><rect x="192" y="173" width="1" height="6" fill="#c0c0c0"/><rect x="193" y="171" width="1" height="3" fill="#c0c0c0"/><rect x="194" y="171" width="1" height="1" fill="#c0c0c0"/><rect x="195" y="171" width="1" height="1" fill="#c0c0c0"/><rect x="196" y="171" width="1" height="1" fill="#c0c0c0"/><rect x="197" y="171" width="1" height="1" fill="#c0c0c0"/><rect x="198" y="171" width="1" height="1" fill="#c0c0c0"/><rect x="199" y="171" width="1" height="1" fill="#c0c0c0"/><rect x="200" y="171" width="1" height="1" fill="#c0c0c0"/><rect x="201" y="171" width="1" height="1" fill="#c0c0c0"/><rect x="202" y="171" width="1" height="1" fill="#c0c0c0"/><rect x="203" y="171" width="1" height="1" fill="#c0c0c0"/><rect x="204" y="171" width="1" height="1" fill="#c0c0c0"/><rect x="205" y="171" width="1" height="1" fill="#c0c0c0"/><rect x="206" y="171" width="1" height="1" fill="#c0c0c0"/><rect x="207" y="171" width="1" height="1" fill="#c0c0c0"/><rect x="208" y="171" width="1" height="1" fill="#c0c0c0"/><rect x="209" y="171" width="1" height="1" fill="#c0c0c0"/><rect x="210" y="171" width="1" height="1" fill="#c0c0c0"/><rect x="211" y="171" width="1" height="1" fill="#c0c0c0"/><rect x="212" y="171" width="1" height="1" fill="#c0c0c0"/><rect x="213" y="171" width="1" height="1" fill="#c0c0c0"/><rect x="214" y="171" width="1" height="1" fill="#c0c0c0"/><rect x="215" y="171" width="1" height="1" fill="#c0c0c0"/><rect x="216" y="171" width="1" height="1" fill="#c0c0c0"/><rect x="217" y="171" width="1" height="1" fill="#c0c0c0"/><rect x="218" y="171" width="1" height="1" fill="#c0c0c0"/><rect x="219" y="171" width="1" height="1" fill="#c0c0c0"/><rect x="220" y="171" width="1" height="1" fill="#c0c0c0"/><rect x="221" y="171" width="1" height="1" fill="#c0c0c0"/><rect x="222" y="171" width="1" height="1" fill="#c0c0c0"/><rect x="223" y="171" width="1" height="1" fill="#c0c0c0"/><rect x="224" y="171" width="1" height="1" fill="#c0c0c0"/><rect x="225" y="171" width="1" height="1" fill="#c0c0c0"/><rect x="226" y="171" width="1" height="1" fill="#c0c0c0"/><rect x="227" y="171" width="1" height="1" fill="#c0c0c0"/><rect x="228" y="171" width="1" height="3" fill="#c0c0c0"/><rect x="229" y="173" width="1" height="6" fill="#c0c0c0"/><rect x="230" y="178" width="1" height="5" fill="#c0c0c0"/><rect x="231" y="178" width="1" height="5" fill="#c0c0c0"/><rect x="232" y="173" width="1" height="6" fill="#c0c0c0"/><rect x="233" y="171" width="1" height="3" fill="#c0c0c0"/><rect x="234" y="171" width="1" height="3" fill="#c0c0c0"/><rect x="235" y="173" width="1" height="6" fill="#c0c0c0"/><rect x="236" y="178" width="1" height="5" fill="#c0c0c0"/><rect x="237" y="178" width="1" height="5" fill="#c0c0c0"/><rect x="238" y="173" width="1" height="6" fill="#c0c0c0"/><rect x="239" y="171" width="1" height="3" fill="#c0c0c0"/><rect x="240" y="171" width="1" height="1" fill="#c0c0c0"/><rect x="241" y="171" width="1" height="1" fill="#c0c0c0"/><rect x="242" y="171" width="1" height="1" fill="#c0c0c0"/><rect x="243" y="171" width="1" height="1" fill="#c0c0c0"/><rect x="244" y="171" width="1" height="1" fill="#c0c0c0"/><rect x="245" y="171" width="1" height="1" fill="#c0c0c0"/><rect x="246" y="171" width="1" height="1" fill="#c0c0c0"/><rect x="247" y="171" width="1" height="1" fill="#c0c0c0"/><rect x="248" y="171" width="1" height="1" fill="#c0c0c0"/><rect x="249" y="171" width="1" height="1" fill="#c0c0c0"/><rect x="250" y="171" width="1" height="1" fill="#c0c0c0"/><rect x="251" y="171" width="1" height="1" fill="#c0c0c0"/><rect x="252" y="171" width="1" height="1" fill="#c0c0c0"/><rect x="253" y="171" width="1" height="1" fill="#c0c0c0"/><rect x="254" y="171" width="1" height="1" fill="#c0c0c0"/><rect x="255" y="171" width="1" height="1" fill="#c0c0c0"/><rect x="256" y="171" width="1" height="1" fill="#c0c0c0"/><rect x="257" y="171" width="1" height="1" fill="#c0c0c0"/><rect x="258" y="171" width="1" height="1" fill="#c0c0c0"/><rect x="259" y="171" width="1" height="1" fill="#c0c0c0"/><rect x="260" y="171" width="1" height="1" fill="#c0c0c0"/><rect x="261" y="171" width="1" height="1" fill="#c0c0c0"/><rect x="262" y="171" width="1" height="1" fill="#c0c0c0"/><rect x="263" y="171" width="1" height="1" fill="#c0c0c0"/><rect x="264" y="171" width="1" height="1" fill="#c0c0c0"/><rect x="265" y="171" width="1" height="1" fill="#c0c0c0"/><rect x="266" y="171" width="1" height="1" fill="#c0c0c0"/><rect x="267" y="171" width="1" height="1" fill="#c0c0c0"/><rect x="268" y="171" width="1" height="1" fill="#c0c0c0"/><rect x="269" y="171" width="1" height="1" fill="#c0c0c0"/><rect x="270" y="171" width="1" height="1" fill="#c0c0c0"/><rect x="271" y="171" width="1" height="1" fill="#c0c0c0"/><rect x="272" y="171" width="1" height="1" fill="#c0c0c0"/><rect x="273" y="171" width="1" height="1" fill="#c0c0c0"/><rect x="274" y="171" width="1" height="1" fill="#c0c0c0"/><rect x="275" y="171" width="1" height="1" fill="#c0c0c0"/><rect x="276" y="171" width="1" height="1" fill="#c0c0c0"/><rect x="277" y="171" width="1" height="1" fill="#c0c0c0"/><rect x="278" y="171" width="1" height="1" fill="#c0c0c0"/><rect x="279" y="171" width="1" height="1" fill="#c0c0c0"/><rect x="280" y="171" width="1" height="1" fill="#c0c0c0"/><rect x="281" y="171" width="1" height="1" fill="#c0c0c0"/><rect x="282" y="171" width="1" height="1" fill="#c0c0c0"/><rect x="283" y="171" width="1" height="1" fill="#c0c0c0"/><rect x="284" y="171" width="1" height="1" fill="#c0c0c0"/><rect x="285" y="171" width="1" height="1" fill="#c0c0c0"/><rect x="286" y="171" width="1" height="1" fill="#c0c0c0"/><rect x="287" y="171" width="1" height="3" fill="#c0c0c0"/><rect x="288" y="173" width="1" height="6" fill="#c0c0c0"/><rect x="289" y="178" width="1" height="5" fill="#c0c0c0"/><rect x="290" y="178" width="1" height="5" fill="#c0c0c0"/><rect x="291" y="173" width="1" height="6" fill="#c0c0c0"/><rect x="292" y="171" width="1" height="3" fill="#c0c0c0"/><rect x="293" y="171" width="1" height="1" fill="#c0c0c0"/><rect x="294" y="171" width="1" height="1" fill="#c0c0c0"/><rect x="295" y="171" width="1" height="1" fill="#c0c0c0"/><rect x="296" y="171" width="1" height="1" fill="#c0c0c0"/><rect x="297" y="171" width="1" height="1" fill="#c0c0c0"/><rect x="298" y="171" width="1" height="1" fill="#c0c0c0"/><rect x="299" y="171" width="1" height="1" fill="#c0c0c0"/><rect x="300" y="171" width="1" height="1" fill="#c0c0c0"/><rect x="301" y="171" width="1" height="1" fill="#c0c0c0"/><rect x="302" y="171" width="1" height="1" fill="#c0c0c0"/><rect x="303" y="171" width="1" height="1" fill="#c0c0c0"/><rect x="304" y="171" width="1" height="1" fill="#c0c0c0"/><rect x="305" y="171" width="1" height="1" fill="#c0c0c0"/><rect x="306" y="171" width="1" height="1" fill="#c0c0c0"/><rect x="307" y="171" width="1" height="1" fill="#c0c0c0"/><rect x="308" y="171" width="1" height="1" fill="#c0c0c0"/><rect x="309" y="171" width="1" height="1" fill="#c0c0c0"/><rect x="310" y="171" width="1" height="1" fill="#c0c0c0"/><rect x="311" y="171" width="1" height="1" fill="#c0c0c0"/><rect x="312" y="171" width="1" height="1" fill="#c0c0c0"/><rect x="313" y="171" width="1" height="3" fill="#c0c0c0"/><rect x="314" y="173" width="1" height="6" fill="#c0c0c0"/><rect x="315" y="178" width="1" height="5" fill="#c0c0c0"/><rect x="316" y="178" width="1" height="5" fill="#c0c0c0"/><rect x="317" y="173" width="1" height="6" fill="#c0c0c0"/><rect x="318" y="171" width="1" height="3" fill="#c0c0c0"/><rect x="319" y="171" width="1" height="1" fill="#c0c0c0"/><rect x="320" y="171" width="1" height="1" fill="#c0c0c0"/><rect x="321" y="171" width="1" height="1" fill="#c0c0c0"/><rect x="322" y="171" width="1" height="1" fill="#c0c0c0"/><rect x="323" y="171" width="1" height="1" fill="#c0c0c0"/><rect x="324" y="171" width="1" height="1" fill="#c0c0c0"/><rect x="325" y="171" width="1" height="1" fill="#c0c0c0"/><rect x="326" y="171" width="1" height="1" fill="#c0c0c0"/><rect x="327" y="171" width="1" height="1" fill="#c0c0c0"/><rect x="328" y="171" width="1" height="1" fill="#c0c0c0"/><rect x="329" y="171" width="1" height="1" fill="#c0c0c0"/><rect x="330" y="171" width="1" height="1" fill="#c0c0c0"/><rect x="331" y="171" width="1" height="1" fill="#c0c0c0"/><rect x="332" y="171" width="1" height="1" fill="#c0c0c0"/><rect x="333" y="171" width="1" height="1" fill="#c0c0c0"/><rect x="334" y="171" width="1" height="1" fill="#c0c0c0"/><rect x="335" y="171" width="1" height="1" fill="#c0c0c0"/><rect x="336" y="171" width="1" height="1" fill="#c0c0c0"/><rect x="337" y="171" width="1" height="1" fill="#c0c0c0"/><rect x="338" y="171" width="1" height="1" fill="#c0c0c0"/><rect x="339" y="171" width="1" height="1" fill="#c0c0c0"/><rect x="340" y="171" width="1" height="1" fill="#c0c0c0"/><rect x="341" y="171" width="1" height="1" fill="#c0c0c0"/><rect x="342" y="171" width="1" height="1" fill="#c0c0c0"/><rect x="343" y="171" width="1" height="1" fill="#c0c0c0"/><rect x="344" y="171" width="1" height="1" fill="#c0c0c0"/><rect x="345" y="171" width="1" height="1" fill="#c0c0c0"/><rect x="346" y="171" width="1" height="1" fill="#c0c0c0"/><rect x="347" y="171" width="1" height="1" fill="#c0c0c0"/><rect x="348" y="171" width="1" height="1" fill="#c0c0c0"/><rect x="349" y="171" width="1" height="1" fill="#c0c0c0"/><rect x="350" y="171" width="1" height="1" fill="#c0c0c0"/><rect x="351" y="171" width="1" height="1" fill="#c0c0c0"/><rect x="352" y="171" width="1" height="1" fill="#c0c0c0"/><rect x="353" y="171" width="1" height="1" fill="#c0c0c0"/><rect x="354" y="171" width="1" height="1" fill="#c0c0c0"/><rect x="355" y="171" width="1" height="1" fill="#c0c0c0"/><rect x="356" y="171" width="1" height="1" fill="#c0c0c0"/><rect x="357" y="171" width="1" height="1" fill="#c0c0c0"/><rect x="358" y="171" width="1" height="3" fill="#c0c0c0"/><rect x="359" y="173" width="1" height="6" fill="#c0c0c0"/><rect x="360" y="178" width="1" height="5" fill="#c0c0c0"/><rect x="361" y="178" width="1" height="5" fill="#c0c0c0"/><rect x="362" y="173" width="1" height="6" fill="#c0c0c0"/><rect x="363" y="171" width="1" height="3" fill="#c0c0c0"/><rect x="364" y="171" width="1" height="1" fill="#c0c0c0"/><rect x="365" y="171" width="1" height="1" fill="#c0c0c0"/><rect x="366" y="171" width="1" height="1" fill="#c0c0c0"/><rect x="367" y="171" width="1" height="1" fill="#c0c0c0"/><rect x="368" y="171" width="1" height="1" fill="#c0c0c0"/><rect x="369" y="171" width="1" height="1" fill="#c0c0c0"/><rect x="370" y="171" width="1" height="1" fill="#c0c0c0"/><rect x="371" y="171" width="1" height="1" fill="#c0c0c0"/><rect x="372" y="171" width="1" height="1" fill="#c0c0c0"/><rect x="373" y="171" width="1" height="1" fill="#c0c0c0"/><rect x="374" y="171" width="1" height="1" fill="#c0c0c0"/><rect x="375" y="171" width="1" height="1" fill="#c0c0c0"/><rect x="376" y="171" width="1" height="1" fill="#c0c0c0"/><rect x="377" y="171" width="1" height="1" fill="#c0c0c0"/><rect x="378" y="171" width="1" height="1" fill="#c0c0c0"/><rect x="379" y="171" width="1" height="1" fill="#c0c0c0"/><rect x="380" y="171" width="1" height="1" fill="#c0c0c0"/><rect x="381" y="171" width="1" height="1" fill="#c0c0c0"/><rect x="382" y="171" width="1" height="1" fill="#c0c0c0"/><rect x="383" y="171" width="1" height="1" fill="#c0c0c0"/><rect x="384" y="171" width="1" height="1" fill="#c0c0c0"/><rect x="385" y="171" width="1" height="1" fill="#c0c0c0"/><rect x="386" y="171" width="1" height="1" fill="#c0c0c0"/><rect x="387" y="171" width="1" height="1" fill="#c0c0c0"/><rect x="388" y="171" width="1" height="1" fill="#c0c0c0"/><rect x="389" y="171" width="1" height="1" fill="#c0c0c0"/><rect x="390" y="171" width="1" height="1" fill="#c0c0c0"/><rect x="391" y="171" width="1" height="1" fill="#c0c0c0"/><rect x="392" y="171" width="1" height="1" fill="#c0c0c0"/><rect x="393" y="171" width="1" height="1" fill="#c0c0c0"/><rect x="394" y="171" width="1" height="1" fill="#c0c0c0"/><rect x="395" y="171" width="1" height="1" fill="#c0c0c0"/><rect x="396" y="171" width="1" height="1" fill="#c0c0c0"/><rect x="397" y="171" width="1" height="1" fill="#c0c0c0"/><rect x="398" y="171" width="1" height="1" fill="#c0c0c0"/><rect x="399" y="171" width="1" height="1" fill="#c0c0c0"/><rect x="400" y="171" width="1" height="3" fill="#c0c0c0"/><rect x="401" y="173" width="1" height="6" fill="#c0c0c0"/><rect x="402" y="178" width="1" height="5" fill="#c0c0c0"/><rect x="403" y="178" width="1" height="5" fill="#c0c0c0"/><rect x="404" y="173" width="1" height="6" fill="#c0c0c0"/><rect x="405" y="171" width="1" height="3" fill="#c0c0c0"/><rect x="406" y="171" width="1" height="1" fill="#c0c0c0"/><rect x="407" y="171" width="1" height="1" fill="#c0c0c0"/><rect x="408" y="171" width="1" height="1" fill="#c0c0c0"/><rect x="409" y="171" width="1" height="1" fill="#c0c0c0"/><rect x="410" y="171" width="1" height="1" fill="#c0c0c0"/><rect x="411" y="171" width="1" height="1" fill="#c0c0c0"/><rect x="412" y="171" width="1" height="1" fill="#c0c0c0"/><rect x="413" y="171" width="1" height="1" fill="#c0c0c0"/><rect x="414" y="171" width="1" height="1" fill="#c0c0c0"/><rect x="415" y="171" width="1" height="1" fill="#c0c0c0"/><rect x="416" y="171" width="1" height="1" fill="#c0c0c0"/><rect x="417" y="171" width="1" height="1" fill="#c0c0c0"/><rect x="418" y="171" width="1" height="1" fill="#c0c0c0"/><rect x="419" y="171" width="1" height="1" fill="#c0c0c0"/><rect x="420" y="171" width="1" height="1" fill="#c0c0c0"/><rect x="421" y="171" width="1" height="1" fill="#c0c0c0"/><rect x="422" y="171" width="1" height="1" fill="#c0c0c0"/><rect x="423" y="171" width="1" height="1" fill="#c0c0c0"/><rect x="424" y="171" width="1" height="1" fill="#c0c0c0"/><rect x="425" y="171" width="1" height="1" fill="#c0c0c0"/><rect x="426" y="171" width="1" height="1" fill="#c0c0c0"/><rect x="427" y="171" width="1" height="1" fill="#c0c0c0"/><rect x="428" y="171" width="1" height="1" fill="#c0c0c0"/><rect x="429" y="171" width="1" height="1" fill="#c0c0c0"/><rect x="430" y="171" width="1" height="1" fill="#c0c0c0"/><rect x="431" y="171" width="1" height="1" fill="#c0c0c0"/><rect x="432" y="171" width="1" height="1" fill="#c0c0c0"/><rect x="433" y="171" width="1" height="1" fill="#c0c0c0"/><rect x="434" y="171" width="1" height="1" fill="#c0c0c0"/><rect x="435" y="171" width="1" height="1" fill="#c0c0c0"/><rect x="436" y="171" width="1" height="1" fill="#c0c0c0"/><rect x="437" y="171" width="1" height="1" fill="#c0c0c0"/><rect x="438" y="171" width="1" height="1" fill="#c0c0c0"/><rect x="439" y="171" width="1" height="1" fill="#c0c0c0"/><rect x="440" y="171" width="1" height="1" fill="#c0c0c0"/><rect x="441" y="171" width="1" height="1" fill="#c0c0c0"/><rect x="442" y="171" width="1" height="1" fill="#c0c0c0"/><rect x="443" y="171" width="1" height="1" fill="#c0c0c0"/><rect x="444" y="171" width="1" height="1" fill="#c0c0c0"/><rect x="445" y="171" width="1" height="1" fill="#c0c0c0"/><rect x="446" y="171" width="1" height="1" fill="#c0c0c0"/><rect x="447" y="171" width="1" height="3" fill="#c0c0c0"/><rect x="448" y="173" width="1" height="6" fill="#c0c0c0"/><rect x="449" y="178" width="1" height="5" fill="#c0c0c0"/><rect x="450" y="178" width="1" height="5" fill="#c0c0c0"/><rect x="451" y="173" width="1" height="6" fill="#c0c0c0"/><rect x="452" y="171" width="1" height="3" fill="#c0c0c0"/><rect x="453" y="171" width="1" height="1" fill="#c0c0c0"/><rect x="454" y="171" width="1" height="1" fill="#c0c0c0"/><rect x="455" y="171" width="1" height="1" fill="#c0c0c0"/><rect x="456" y="171" width="1" height="1" fill="#c0c0c0"/><rect x="457" y="171" width="1" height="1" fill="#c0c0c0"/><rect x="458" y="171" width="1" height="1" fill="#c0c0c0"/><rect x="459" y="171" width="1" height="1" fill="#c0c0c0"/><rect x="460" y="171" width="1" height="1" fill="#c0c0c0"/><rect x="461" y="171" width="1" height="1" fill="#c0c0c0"/><rect x="462" y="171" width="1" height="1" fill="#c0c0c0"/><rect x="463" y="171" width="1" height="1" fill="#c0c0c0"/><rect x="464" y="171" width="1" height="1" fill="#c0c0c0"/><rect x="465" y="171" width="1" height="1" fill="#c0c0c0"/><rect x="466" y="171" width="1" height="1" fill="#c0c0c0"/><rect x="467" y="171" width="1" height="1" fill="#c0c0c0"/><rect x="468" y="171" width="1" height="1" fill="#c0c0c0"/><rect x="469" y="171" width="1" height="1" fill="#c0c0c0"/><rect x="470" y="171" width="1" height="1" fill="#c0c0c0"/><rect x="471" y="171" width="1" height="1" fill="#c0c0c0"/><rect x="472" y="171" width="1" height="1" fill="#c0c0c0"/><rect x="473" y="171" width="1" height="1" fill="#c0c0c0"/><rect x="474" y="171" width="1" height="1" fill="#c0c0c0"/><rect x="475" y="171" width="1" height="1" fill="#c0c0c0"/><rect x="476" y="171" width="1" height="1" fill="#c0c0c0"/><rect x="477" y="171" width="1" height="1" fill="#c0c0c0"/><rect x="478" y="171" width="1" height="1" fill="#c0c0c0"/><rect x="479" y="171" width="1" height="1" fill="#c0c0c0"/><rect x="480" y="171" width="1" height="3" fill="#c0c0c0"/><rect x="481" y="173" width="1" height="6" fill="#c0c0c0"/><rect x="482" y="178" width="1" height="5" fill="#c0c0c0"/><rect x="483" y="178" width="1" height="5" fill="#c0c0c0"/><rect x="484" y="173" width="1" height="6" fill="#c0c0c0"/><rect x="485" y="173" width="1" height="1" fill="#c0c0c0"/><rect x="486" y="173" width="1" height="6" fill="#c0c0c0"/><rect x="487" y="178" width="1" height="5" fill="#c0c0c0"/><rect x="488" y="178" width="1" height="5" fill="#c0c0c0"/><rect x="489" y="173" width="1" height="6" fill="#c0c0c0"/><rect x="490" y="171" width="1" height="3" fill="#c0c0c0"/><rect x="491" y="171" width="1" height="1" fill="#c0c0c0"/><rect x="492" y="171" width="1" height="1" fill="#c0c0c0"/><rect x="493" y="171" width="1" height="1" fill="#c0c0c0"/><rect x="494" y="171" width="1" height="1" fill="#c0c0c0"/><rect x="495" y="171" width="1" height="1" fill="#c0c0c0"/><rect x="496" y="171" width="1" height="1" fill="#c0c0c0"/><rect x="497" y="171" width="1" height="1" fill="#c0c0c0"/><rect x="498" y="171" width="1" height="1" fill="#c0c0c0"/><rect x="499" y="171" width="1" height="1" fill="#c0c0c0"/><rect x="500" y="171" width="1" height="1" fill="#c0c0c0"/><rect x="501" y="171" width="1" height="1" fill="#c0c0c0"/><rect x="502" y="171" width="1" height="1" fill="#c0c0c0"/><rect x="503" y="171" width="1" height="1" fill="#c0c0c0"/><rect x="504" y="171" width="1" height="1" fill="#c0c0c0"/><rect x="505" y="171" width="1" height="1" fill="#c0c0c0"/><rect x="506" y="171" width="1" height="1" fill="#c0c0c0"/><rect x="507" y="171" width="1" height="1" fill="#c0c0c0"/><rect x="508" y="171" width="1" height="1" fill="#c0c0c0"/><rect x="509" y="171" width="1" height="1" fill="#c0c0c0"/><rect x="510" y="171" width="1" height="1" fill="#c0c0c0"/><rect x="511" y="171" width="1" height="1" fill="#c0c0c0"/><rect x="512" y="171" width="1" height="1" fill="#c0c0c0"/><rect x="513" y="171" width="1" height="1" fill="#c0c0c0"/><rect x="62" y="179" width="1" height="1" fill="#00ff00"/><rect x="63" y="175" width="1" height="5" fill="#00ff00"/><rect x="64" y="175" width="1" height="2" fill="#00ff00"/><rect x="65" y="176" width="1" height="1" fill="#00ff00"/><rect x="66" y="175" width="1" height="2" fill="#00ff00"/><rect x="67" y="175" width="1" height="1" fill="#00ff00"/><rect x="68" y="175" width="1" height="1" fill="#00ff00"/><rect x="69" y="174" width="1" height="2" fill="#00ff00"/><rect x="70" y="174" width="1" height="2" fill="#00ff00"/><rect x="71" y="174" width="1" height="2" fill="#00ff00"/><rect x="72" y="174" width="1" height="1" fill="#00ff00"/><rect x="73" y="174" width="1" height="1" fill="#00ff00"/><rect x="74" y="174" width="1" height="1" fill="#00ff00"/><rect x="75" y="172" width="1" height="3" fill="#00ff00"/><rect x="76" y="172" width="1" height="3" fill="#00ff00"/><rect x="77" y="173" width="1" height="2" fill="#00ff00"/><rect x="78" y="173" width="1" height="1" fill="#00ff00"/><rect x="79" y="172" width="1" height="2" fill="#00ff00"/><rect x="80" y="172" width="1" height="1" fill="#00ff00"/><rect x="81" y="172" width="1" height="1" fill="#00ff00"/><rect x="82" y="171" width="1" height="2" fill="#00ff00"/><rect x="83" y="171" width="1" height="2" fill="#00ff00"/><rect x="84" y="172" width="1" height="1" fill="#00ff00"/><rect x="85" y="172" width="1" height="1" fill="#00ff00"/><rect x="86" y="172" width="1" height="1" fill="#00ff00"/><rect x="87" y="171" width="1" height="2" fill="#00ff00"/><rect x="88" y="171" width="1" height="2" fill="#00ff00"/><rect x="89" y="172" width="1" height="1" fill="#00ff00"/><rect x="90" y="172" width="1" height="1" fill="#00ff00"/><rect x="91" y="171" width="1" height="2" fill="#00ff00"/><rect x="92" y="171" width="1" height="1" fill="#00ff00"/><rect x="93" y="171" width="1" height="2" fill="#00ff00"/><rect x="94" y="171" width="1" height="2" fill="#00ff00"/><rect x="95" y="171" width="1" height="1" fill="#00ff00"/><rect x="96" y="170" width="1" height="2" fill="#00ff00"/><rect x="97" y="170" width="1" height="1" fill="#00ff00"/><rect x="98" y="170" width="1" height="1" fill="#00ff00"/><rect x="99" y="170" width="1" height="1" fill="#00ff00"/><rect x="100" y="170" width="1" height="1" fill="#00ff00"/><rect x="101" y="169" width="1" height="2" fill="#00ff00"/><rect x="102" y="169" width="1" height="2" fill="#00ff00"/><rect x="103" y="170" width="1" height="1" fill="#00ff00"/><rect x="104" y="169" width="1" height="2" fill="#00ff00"/><rect x="105" y="168" width="1" height="2" fill="#00ff00"/><rect x="106" y="168" width="1" height="3" fill="#00ff00"/><rect x="107" y="170" width="1" height="1" fill="#00ff00"/><rect x="108" y="169" width="1" height="2" fill="#00ff00"/><rect x="109" y="169" width="1" height="1" fill="#00ff00"/><rect x="110" y="168" width="1" height="2" fill="#00ff00"/><rect x="111" y="168" width="1" height="2" fill="#00ff00"/><rect x="112" y="168" width="1" height="2" fill="#00ff00"/><rect x="113" y="168" width="1" height="1" fill="#00ff00"/><rect x="114" y="168" width="1" height="1" fill="#00ff00"/><rect x="115" y="168" width="1" height="1" fill="#00ff00"/><rect x="116" y="168" width="1" height="1" fill="#00ff00"/><rect x="117" y="168" width="1" height="2" fill="#00ff00"/><rect x="118" y="169" width="1" height="1" fill="#00ff00"/><rect x="119" y="168" width="1" height="2" fill="#00ff00"/><rect x="120" y="167" width="1" height="2" fill="#00ff00"/><rect x="121" y="167" width="1" height="1" fill="#00ff00"/><rect x="122" y="167" width="1" height="2" fill="#00ff00"/><rect x="123" y="168" width="1" height="1" fill="#00ff00"/><rect x="124" y="168" width="1" height="1" fill="#00ff00"/><rect x="125" y="167" width="1" height="2" fill="#00ff00"/><rect x="126" y="167" width="1" height="1" fill="#00ff00"/><rect x="127" y="167" width="1" height="1" fill="#00ff00"/><rect x="128" y="167" width="1" height="1" fill="#00ff00"/><rect x="129" y="166" width="1" height="2" fill="#00ff00"/><rect x="130" y="166" width="1" height="2" fill="#00ff00"/><rect x="131" y="167" width="1" height="1" fill="#00ff00"/><rect x="132" y="167" width="1" height="1" fill="#00ff00"/><rect x="133" y="167" width="1" height="1" fill="#00ff00"/><rect x="134" y="166" width="1" height="2" fill="#00ff00"/><rect x="135" y="166" width="1" height="1" fill="#00ff00"/><rect x="136" y="166" width="1" height="1" fill="#00ff00"/><rect x="137" y="165" width="1" height="2" fill="#00ff00"/><rect x="138" y="165" width="1" height="2" fill="#00ff00"/><rect x="139" y="166" width="1" height="1" fill="#00ff00"/><rect x="140" y="166" width="1" height="1" fill="#00ff00"/><rect x="141" y="166" width="1" height="1" fill="#00ff00"/><rect x="142" y="165" width="1" height="2" fill="#00ff00"/><rect x="143" y="165" width="1" height="1" fill="#00ff00"/><rect x="144" y="165" width="1" height="1" fill="#00ff00"/><rect x="145" y="165" width="1" height="1" fill="#00ff00"/><rect x="146" y="165" width="1" height="1" fill="#00ff00"/><rect x="147" y="165" width="1" height="1" fill="#00ff00"/><rect x="148" y="165" width="1" height="1" fill="#00ff00"/><rect x="149" y="165" width="1" height="1" fill="#00ff00"/><rect x="150" y="164" width="1" height="2" fill="#00ff00"/><rect x="151" y="164" width="1" height="1" fill="#00ff00"/><rect x="152" y="164" width="1" height="1" fill="#00ff00"/><rect x="153" y="164" width="1" height="1" fill="#00ff00"/><rect x="154" y="164" width="1" height="1" fill="#00ff00"/><rect x="155" y="164" width="1" height="1" fill="#00ff00"/><rect x="156" y="164" width="1" height="1" fill="#00ff00"/><rect x="157" y="164" width="1" height="1" fill="#00ff00"/><rect x="158" y="164" width="1" height="1" fill="#00ff00"/><rect x="159" y="164" width="1" height="1" fill="#00ff00"/><rect x="160" y="163" width="1" height="2" fill="#00ff00"/><rect x="161" y="163" width="1" height="1" fill="#00ff00"/><rect x="162" y="163" width="1" height="1" fill="#00ff00"/><rect x="163" y="163" width="1" height="2" fill="#00ff00"/><rect x="164" y="163" width="1" height="2" fill="#00ff00"/><rect x="165" y="162" width="1" height="2" fill="#00ff00"/><rect x="166" y="162" width="1" height="3" fill="#00ff00"/><rect x="167" y="163" width="1" height="2" fill="#00ff00"/><rect x="168" y="163" width="1" height="1" fill="#00ff00"/><rect x="169" y="163" width="1" height="1" fill="#00ff00"/><rect x="170" y="163" width="1" height="1" fill="#00ff00"/><rect x="171" y="162" width="1" height="2" fill="#00ff00"/><rect x="172" y="162" width="1" height="1" fill="#00ff00"/><rect x="173" y="162" width="1" height="1" fill="#00ff00"/><rect x="174" y="162" width="1" height="1" fill="#00ff00"/><rect x="175" y="162" width="1" height="1" fill="#00ff00"/><rect x="176" y="162" width="1" height="1" fill="#00ff00"/><rect x="177" y="162" width="1" height="1" fill="#00ff00"/><rect x="178" y="161" width="1" height="2" fill="#00ff00"/><rect x="179" y="161" width="1" height="1" fill="#00ff00"/><rect x="180" y="161" width="1" height="1" fill="#00ff00"/><rect x="181" y="161" width="1" height="1" fill="#00ff00"/><rect x="182" y="161" width="1" height="1" fill="#00ff00"/><rect x="183" y="161" width="1" height="2" fill="#00ff00"/><rect x="184" y="161" width="1" height="2" fill="#00ff00"/><rect x="185" y="161" width="1" height="1" fill="#00ff00"/><rect x="186" y="161" width="1" height="1" fill="#00ff00"/><rect x="187" y="161" width="1" height="1" fill="#00ff00"/><rect x="188" y="161" width="1" height="1" fill="#00ff00"/><rect x="189" y="161" width="1" height="1" fill="#00ff00"/><rect x="190" y="160" width="1" height="2" fill="#00ff00"/><rect x="191" y="160" width="1" height="2" fill="#00ff00"/><rect x="192" y="160" width="1" height="2" fill="#00ff00"/><rect x="193" y="160" width="1" height="1" fill="#00ff00"/><rect x="194" y="160" width="1" height="2" fill="#00ff00"/><rect x="195" y="160" width="1" height="2" fill="#00ff00"/><rect x="196" y="160" width="1" height="1" fill="#00ff00"/><rect x="197" y="159" width="1" height="2" fill="#00ff00"/><rect x="198" y="159" width="1" height="2" fill="#00ff00"/><rect x="199" y="159" width="1" height="2" fill="#00ff00"/><rect x="200" y="159" width="1" height="1" fill="#00ff00"/><rect x="201" y="159" width="1" height="1" fill="#00ff00"/><rect x="202" y="159" width="1" height="2" fill="#00ff00"/><rect x="203" y="159" width="1" height="2" fill="#00ff00"/><rect x="204" y="158" width="1" height="2" fill="#00ff00"/><rect x="205" y="158" width="1" height="2" fill="#00ff00"/><rect x="206" y="159" width="1" height="1" fill="#00ff00"/><rect x="207" y="159" width="1" height="1" fill="#00ff00"/><rect x="208" y="159" width="1" height="1" fill="#00ff00"/><rect x="209" y="159" width="1" height="1" fill="#00ff00"/><rect x="210" y="158" width="1" height="2" fill="#00ff00"/><rect x="211" y="158" width="1" height="1" fill="#00ff00"/><rect x="212" y="158" width="1" height="2" fill="#00ff00"/><rect x="213" y="158" width="1" height="2" fill="#00ff00"/><rect x="214" y="158" width="1" height="1" fill="#00ff00"/><rect x="215" y="158" width="1" height="1" fill="#00ff00"/><rect x="216" y="158" width="1" height="2" fill="#00ff00"/><rect x="217" y="158" width="1" height="2" fill="#00ff00"/><rect x="218" y="158" width="1" height="1" fill="#00ff00"/><rect x="219" y="158" width="1" height="1" fill="#00ff00"/><rect x="220" y="157" width="1" height="2" fill="#00ff00"/><rect x="221" y="157" width="1" height="2" fill="#00ff00"/><rect x="222" y="158" width="1" height="1" fill="#00ff00"/><rect x="223" y="157" width="1" height="2" fill="#00ff00"/><rect x="224" y="157" width="1" height="2" fill="#00ff00"/><rect x="225" y="158" width="1" height="1" fill="#00ff00"/><rect x="226" y="156" width="1" height="3" fill="#00ff00"/><rect x="227" y="156" width="1" height="1" fill="#00ff00"/><rect x="228" y="156" width="1" height="2" fill="#00ff00"/><rect x="229" y="157" width="1" height="1" fill="#00ff00"/><rect x="230" y="157" width="1" height="1" fill="#00ff00"/><rect x="231" y="157" width="1" height="1" fill="#00ff00"/><rect x="232" y="157" width="1" height="1" fill="#00ff00"/><rect x="233" y="156" width="1" height="2" fill="#00ff00"/><rect x="234" y="156" width="1" height="1" fill="#00ff00"/><rect x="235" y="156" width="1" height="1" fill="#00ff00"/><rect x="236" y="156" width="1" height="1" fill="#00ff00"/><rect x="237" y="156" width="1" height="2" fill="#00ff00"/><rect x="238" y="156" width="1" height="2" fill="#00ff00"/><rect x="239" y="155" width="1" height="2" fill="#00ff00"/><rect x="240" y="155" width="1" height="1" fill="#00ff00"/><rect x="241" y="155" width="1" height="3" fill="#00ff00"/><rect x="242" y="156" width="1" height="2" fill="#00ff00"/><rect x="243" y="156" width="1" height="1" fill="#00ff00"/><rect x="244" y="156" width="1" height="1" fill="#00ff00"/><rect x="245" y="156" width="1" height="1" fill="#00ff00"/><rect x="246" y="155" width="1" height="2" fill="#00ff00"/><rect x="247" y="155" width="1" height="1" fill="#00ff00"/><rect x="248" y="155" width="1" height="2" fill="#00ff00"/><rect x="249" y="156" width="1" height="1" fill="#00ff00"/><rect x="250" y="155" width="1" height="2" fill="#00ff00"/><rect x="251" y="155" width="1" height="2" fill="#00ff00"/><rect x="252" y="155" width="1" height="2" fill="#00ff00"/><rect x="253" y="154" width="1" height="2" fill="#00ff00"/><rect x="254" y="154" width="1" height="2" fill="#00ff00"/><rect x="255" y="155" width="1" height="1" fill="#00ff00"/><rect x="256" y="155" width="1" height="1" fill="#00ff00"/><rect x="257" y="154" width="1" height="2" fill="#00ff00"/><rect x="258" y="154" width="1" height="1" fill="#00ff00"/><rect x="259" y="154" width="1" height="1" fill="#00ff00"/><rect x="260" y="154" width="1" height="1" fill="#00ff00"/><rect x="261" y="154" width="1" height="1" fill="#00ff00"/><rect x="262" y="154" width="1" height="1" fill="#00ff00"/><rect x="263" y="154" width="1" height="1" fill="#00ff00"/><rect x="264" y="154" width="1" height="2" fill="#00ff00"/><rect x="265" y="154" width="1" height="2" fill="#00ff00"/><rect x="266" y="154" width="1" height="1" fill="#00ff00"/><rect x="267" y="153" width="1" height="2" fill="#00ff00"/><rect x="268" y="153" width="1" height="2" fill="#00ff00"/><rect x="269" y="153" width="1" height="2" fill="#00ff00"/><rect x="270" y="153" width="1" height="1" fill="#00ff00"/><rect x="271" y="153" width="1" height="1" fill="#00ff00"/><rect x="272" y="152" width="1" height="2" fill="#00ff00"/><rect x="273" y="152" width="1" height="2" fill="#00ff00"/><rect x="274" y="153" width="1" height="1" fill="#00ff00"/><rect x="275" y="153" width="1" height="1" fill="#00ff00"/><rect x="276" y="152" width="1" height="2" fill="#00ff00"/><rect x="277" y="152" width="1" height="2" fill="#00ff00"/><rect x="278" y="153" width="1" height="1" fill="#00ff00"/><rect x="279" y="153" width="1" height="1" fill="#00ff00"/><rect x="280" y="153" width="1" height="1" fill="#00ff00"/><rect x="281" y="152" width="1" height="2" fill="#00ff00"/><rect x="282" y="152" width="1" height="1" fill="#00ff00"/><rect x="283" y="152" width="1" height="1" fill="#00ff00"/><rect x="284" y="152" width="1" height="2" fill="#00ff00"/><rect x="285" y="153" width="1" height="1" fill="#00ff00"/><rect x="286" y="152" width="1" height="2" fill="#00ff00"/><rect x="287" y="152" width="1" height="1" fill="#00ff00"/><rect x="288" y="152" width="1" height="1" fill="#00ff00"/><rect x="289" y="152" width="1" height="1" fill="#00ff00"/><rect x="290" y="152" width="1" height="1" fill="#00ff00"/><rect x="291" y="151" width="1" height="2" fill="#00ff00"/><rect x="292" y="151" width="1" height="2" fill="#00ff00"/><rect x="293" y="152" width="1" height="1" fill="#00ff00"/><rect x="294" y="151" width="1" height="2" fill="#00ff00"/><rect x="295" y="151" width="1" height="1" fill="#00ff00"/><rect x="296" y="151" width="1" height="1" fill="#00ff00"/><rect x="297" y="150" width="1" height="2" fill="#00ff00"/><rect x="298" y="150" width="1" height="2" fill="#00ff00"/><rect x="299" y="150" width="1" height="2" fill="#00ff00"/><rect x="300" y="150" width="1" height="2" fill="#00ff00"/><rect x="301" y="151" width="1" height="1" fill="#00ff00"/><rect x="302" y="151" width="1" height="1" fill="#00ff00"/><rect x="303" y="150" width="1" height="2" fill="#00ff00"/><rect x="304" y="150" width="1" height="1" fill="#00ff00"/><rect x="305" y="150" width="1" height="1" fill="#00ff00"/><rect x="306" y="150" width="1" height="1" fill="#00ff00"/><rect x="307" y="150" width="1" height="1" fill="#00ff00"/><rect x="308" y="149" width="1" height="2" fill="#00ff00"/><rect x="309" y="149" width="1" height="2" fill="#00ff00"/><rect x="310" y="150" width="1" height="1" fill="#00ff00"/><rect x="311" y="150" width="1" height="1" fill="#00ff00"/><rect x="312" y="150" width="1" height="1" fill="#00ff00"/><rect x="313" y="150" width="1" height="2" fill="#00ff00"/><rect x="314" y="150" width="1" height="2" fill="#00ff00"/><rect x="315" y="149" width="1" height="2" fill="#00ff00"/><rect x="316" y="149" width="1" height="1" fill="#00ff00"/><rect x="317" y="149" width="1" height="2" fill="#00ff00"/><rect x="318" y="150" width="1" height="1" fill="#00ff00"/><rect x="319" y="149" width="1" height="2" fill="#00ff00"/><rect x="320" y="149" width="1" height="1" fill="#00ff00"/><rect x="321" y="149" width="1" height="1" fill="#00ff00"/><rect x="322" y="149" width="1" height="1" fill="#00ff00"/><rect x="323" y="149" width="1" height="1" fill="#00ff00"/><rect x="324" y="149" width="1" height="2" fill="#00ff00"/><rect x="325" y="149" width="1" height="2" fill="#00ff00"/><rect x="326" y="149" width="1" height="1" fill="#00ff00"/><rect x="327" y="149" width="1" height="2" fill="#00ff00"/><rect x="328" y="148" width="1" height="3" fill="#00ff00"/><rect x="329" y="148" width="1" height="2" fill="#00ff00"/><rect x="330" y="148" width="1" height="2" fill="#00ff00"/><rect x="331" y="148" width="1" height="2" fill="#00ff00"/><rect x="332" y="149" width="1" height="1" fill="#00ff00"/><rect x="333" y="148" width="1" height="2" fill="#00ff00"/><rect x="334" y="148" width="1" height="1" fill="#00ff00"/><rect x="335" y="148" width="1" height="1" fill="#00ff00"/><rect x="336" y="148" width="1" height="1" fill="#00ff00"/><rect x="337" y="148" width="1" height="1" fill="#00ff00"/><rect x="338" y="148" width="1" height="1" fill="#00ff00"/><rect x="339" y="148" width="1" height="1" fill="#00ff00"/><rect x="340" y="148" width="1" height="2" fill="#00ff00"/><rect x="341" y="148" width="1" height="2" fill="#00ff00"/><rect x="342" y="148" width="1" height="1" fill="#00ff00"/><rect x="343" y="148" width="1" height="1" fill="#00ff00"/><rect x="344" y="148" width="1" height="1" fill="#00ff00"/><rect x="345" y="147" width="1" height="2" fill="#00ff00"/><rect x="346" y="147" width="1" height="2" fill="#00ff00"/><rect x="347" y="148" width="1" height="1" fill="#00ff00"/><rect x="348" y="147" width="1" height="2" fill="#00ff00"/><rect x="349" y="147" width="1" height="1" fill="#00ff00"/><rect x="350" y="147" width="1" height="1" fill="#00ff00"/><rect x="351" y="147" width="1" height="1" fill="#00ff00"/><rect x="352" y="147" width="1" height="1" fill="#00ff00"/><rect x="353" y="147" width="1" height="2" fill="#00ff00"/><rect x="354" y="148" width="1" height="1" fill="#00ff00"/><rect x="355" y="146" width="1" height="3" fill="#00ff00"/><rect x="356" y="146" width="1" height="2" fill="#00ff00"/><rect x="357" y="146" width="1" height="2" fill="#00ff00"/><rect x="358" y="146" width="1" height="2" fill="#00ff00"/><rect x="359" y="147" width="1" height="1" fill="#00ff00"/><rect x="360" y="147" width="1" height="1" fill="#00ff00"/><rect x="361" y="146" width="1" height="2" fill="#00ff00"/><rect x="362" y="146" width="1" height="2" fill="#00ff00"/><rect x="363" y="146" width="1" height="2" fill="#00ff00"/><rect x="364" y="146" width="1" height="1" fill="#00ff00"/><rect x="365" y="146" width="1" height="1" fill="#00ff00"/><rect x="366" y="146" width="1" height="1" fill="#00ff00"/><rect x="367" y="146" width="1" height="1" fill="#00ff00"/><rect x="368" y="146" width="1" height="1" fill="#00ff00"/><rect x="369" y="146" width="1" height="1" fill="#00ff00"/><rect x="370" y="146" width="1" height="1" fill="#00ff00"/><rect x="371" y="145" width="1" height="2" fill="#00ff00"/><rect x="372" y="145" width="1" height="2" fill="#00ff00"/><rect x="373" y="146" width="1" height="1" fill="#00ff00"/><rect x="374" y="146" width="1" height="1" fill="#00ff00"/><rect x="375" y="146" width="1" height="1" fill="#00ff00"/><rect x="376" y="146" width="1" height="1" fill="#00ff00"/><rect x="377" y="146" width="1" height="1" fill="#00ff00"/><rect x="378" y="145" width="1" height="2" fill="#00ff00"/><rect x="379" y="145" width="1" height="1" fill="#00ff00"/><rect x="380" y="145" width="1" height="1" fill="#00ff00"/><rect x="381" y="145" width="1" height="1" fill="#00ff00"/><rect x="382" y="145" width="1" height="1" fill="#00ff00"/><rect x="383" y="145" width="1" height="1" fill="#00ff00"/><rect x="384" y="145" width="1" height="1" fill="#00ff00"/><rect x="385" y="144" width="1" height="2" fill="#00ff00"/><rect x="386" y="144" width="1" height="2" fill="#00ff00"/><rect x="387" y="145" width="1" height="1" fill="#00ff00"/><rect x="388" y="145" width="1" height="1" fill="#00ff00"/><rect x="389" y="144" width="1" height="2" fill="#00ff00"/><rect x="390" y="144" width="1" height="2" fill="#00ff00"/><rect x="391" y="145" width="1" height="1" fill="#00ff00"/><rect x="392" y="145" width="1" height="1" fill="#00ff00"/><rect x="393" y="144" width="1" height="2" fill="#00ff00"/><rect x="394" y="144" width="1" height="1" fill="#00ff00"/><rect x="395" y="144" width="1" height="1" fill="#00ff00"/><rect x="396" y="144" width="1" height="1" fill="#00ff00"/><rect x="397" y="144" width="1" height="1" fill="#00ff00"/><rect x="398" y="144" width="1" height="2" fill="#00ff00"/><rect x="399" y="144" width="1" height="2" fill="#00ff00"/><rect x="400" y="143" width="1" height="2" fill="#00ff00"/><rect x="401" y="143" width="1" height="2" fill="#00ff00"/><rect x="402" y="144" width="1" height="1" fill="#00ff00"/><rect x="403" y="143" width="1" height="2" fill="#00ff00"/><rect x="404" y="143" width="1" height="1" fill="#00ff00"/><rect x="405" y="143" width="1" height="1" fill="#00ff00"/><rect x="406" y="143" width="1" height="1" fill="#00ff00"/><rect x="407" y="143" width="1" height="1" fill="#00ff00"/><rect x="408" y="143" width="1" height="1" fill="#00ff00"/><rect x="409" y="143" width="1" height="2" fill="#00ff00"/><rect x="410" y="143" width="1" height="2" fill="#00ff00"/><rect x="411" y="143" width="1" height="1" fill="#00ff00"/><rect x="412" y="143" width="1" height="1" fill="#00ff00"/><rect x="413" y="143" width="1" height="1" fill="#00ff00"/><rect x="414" y="142" width="1" height="2" fill="#00ff00"/><rect x="415" y="142" width="1" height="2" fill="#00ff00"/><rect x="416" y="143" width="1" height="1" fill="#00ff00"/><rect x="417" y="142" width="1" height="2" fill="#00ff00"/><rect x="418" y="142" width="1" height="1" fill="#00ff00"/><rect x="419" y="142" width="1" height="1" fill="#00ff00"/><rect x="420" y="142" width="1" height="1" fill="#00ff00"/><rect x="421" y="142" width="1" height="2" fill="#00ff00"/><rect x="422" y="142" width="1" height="2" fill="#00ff00"/><rect x="423" y="142" width="1" height="1" fill="#00ff00"/><rect x="424" y="142" width="1" height="2" fill="#00ff00"/><rect x="425" y="141" width="1" height="3" fill="#00ff00"/><rect x="426" y="141" width="1" height="2" fill="#00ff00"/><rect x="427" y="142" width="1" height="1" fill="#00ff00"/><rect x="428" y="141" width="1" height="2" fill="#00ff00"/><rect x="429" y="141" width="1" height="1" fill="#00ff00"/><rect x="430" y="141" width="1" height="1" fill="#00ff00"/><rect x="431" y="140" width="1" height="2" fill="#00ff00"/><rect x="432" y="140" width="1" height="2" fill="#00ff00"/><rect x="433" y="141" width="1" height="1" fill="#00ff00"/><rect x="434" y="141" width="1" height="1" fill="#00ff00"/><rect x="435" y="141" width="1" height="1" fill="#00ff00"/><rect x="436" y="140" width="1" height="2" fill="#00ff00"/><rect x="437" y="140" width="1" height="2" fill="#00ff00"/><rect x="438" y="140" width="1" height="2" fill="#00ff00"/><rect x="439" y="140" width="1" height="1" fill="#00ff00"/><rect x="440" y="140" width="1" height="1" fill="#00ff00"/><rect x="441" y="140" width="1" height="1" fill="#00ff00"/><rect x="442" y="140" width="1" height="1" fill="#00ff00"/><rect x="443" y="140" width="1" height="1" fill="#00ff00"/><rect x="444" y="139" width="1" height="2" fill="#00ff00"/><rect x="445" y="139" width="1" height="3" fill="#00ff00"/><rect x="446" y="140" width="1" height="2" fill="#00ff00"/><rect x="447" y="140" width="1" height="2" fill="#00ff00"/><rect x="448" y="140" width="1" height="2" fill="#00ff00"/><rect x="449" y="139" width="1" height="2" fill="#00ff00"/><rect x="450" y="139" width="1" height="2" fill="#00ff00"/><rect x="451" y="140" width="1" height="1" fill="#00ff00"/><rect x="452" y="140" width="1" height="1" fill="#00ff00"/><rect x="453" y="140" width="1" height="1" fill="#00ff00"/><rect x="454" y="139" width="1" height="2" fill="#00ff00"/><rect x="455" y="139" width="1" height="1" fill="#00ff00"/><rect x="456" y="139" width="1" height="1" fill="#00ff00"/><rect x="457" y="139" width="1" height="1" fill="#00ff00"/><rect x="458" y="139" width="1" height="1" fill="#00ff00"/><rect x="459" y="139" width="1" height="1" fill="#00ff00"/><rect x="460" y="139" width="1" height="2" fill="#00ff00"/><rect x="461" y="139" width="1" height="2" fill="#00ff00"/><rect x="462" y="139" width="1" height="1" fill="#00ff00"/><rect x="463" y="139" width="1" height="1" fill="#00ff00"/><rect x="464" y="139" width="1" height="2" fill="#00ff00"/><rect x="465" y="139" width="1" height="2" fill="#00ff00"/><rect x="466" y="139" width="1" height="1" fill="#00ff00"/><rect x="467" y="139" width="1" height="1" fill="#00ff00"/><rect x="468" y="139" width="1" height="1" fill="#00ff00"/><rect x="469" y="138" width="1" height="2" fill="#00ff00"/><rect x="470" y="138" width="1" height="1" fill="#00ff00"/><rect x="471" y="138" width="1" height="2" fill="#00ff00"/><rect x="472" y="138" width="1" height="2" fill="#00ff00"/><rect x="473" y="138" width="1" height="1" fill="#00ff00"/><rect x="474" y="138" width="1" height="1" fill="#00ff00"/><rect x="475" y="138" width="1" height="1" fill="#00ff00"/><rect x="476" y="138" width="1" height="1" fill="#00ff00"/><rect x="477" y="138" width="1" height="2" fill="#00ff00"/><rect x="478" y="138" width="1" height="2" fill="#00ff00"/><rect x="479" y="138" width="1" height="1" fill="#00ff00"/><rect x="480" y="138" width="1" height="1" fill="#00ff00"/><rect x="481" y="138" width="1" height="1" fill="#00ff00"/><rect x="482" y="138" width="1" height="1" fill="#00ff00"/><rect x="483" y="138" width="1" height="1" fill="#00ff00"/><rect x="484" y="138" width="1" height="1" fill="#00ff00"/><rect x="485" y="137" width="1" height="2" fill="#00ff00"/><rect x="486" y="137" width="1" height="1" fill="#00ff00"/><rect x="487" y="137" width="1" height="2" fill="#00ff00"/><rect x="488" y="137" width="1" height="2" fill="#00ff00"/><rect x="489" y="137" width="1" height="1" fill="#00ff00"/><rect x="490" y="137" width="1" height="1" fill="#00ff00"/><rect x="491" y="136" width="1" height="2" fill="#00ff00"/><rect x="492" y="136" width="1" height="2" fill="#00ff00"/><rect x="493" y="137" width="1" height="1" fill="#00ff00"/><rect x="494" y="136" width="1" height="2" fill="#00ff00"/><rect x="495" y="136" width="1" height="1" fill="#00ff00"/><rect x="496" y="136" width="1" height="2" fill="#00ff00"/><rect x="497" y="137" width="1" height="1" fill="#00ff00"/><rect x="498" y="136" width="1" height="2" fill="#00ff00"/><rect x="499" y="136" width="1" height="1" fill="#00ff00"/><rect x="500" y="136" width="1" height="2" fill="#00ff00"/><rect x="501" y="136" width="1" height="2" fill="#00ff00"/><rect x="502" y="136" width="1" height="1" fill="#00ff00"/><rect x="503" y="136" width="1" height="1" fill="#00ff00"/><rect x="504" y="136" width="1" height="1" fill="#00ff00"/><rect x="505" y="136" width="1" height="2" fill="#00ff00"/><rect x="506" y="137" width="1" height="1" fill="#00ff00"/><rect x="507" y="136" width="1" height="2" fill="#00ff00"/><rect x="508" y="136" width="1" height="1" fill="#00ff00"/><rect x="509" y="136" width="1" height="1" fill="#00ff00"/><rect x="510" y="135" width="1" height="2" fill="#00ff00"/><rect x="511" y="135" width="1" height="2" fill="#00ff00"/><rect x="512" y="135" width="1" height="2" fill="#00ff00"/><rect x="513" y="135" width="1" height="1" fill="#00ff00"/><rect x="514" y="135" width="1" height="1" fill="#00ff00"/><rect x="515" y="135" width="1" height="1" fill="#00ff00"/><rect x="516" y="135" width="1" height="1" fill="#00ff00"/><rect x="75" y="172" width="1" height="29" fill="#00ff00"/><rect x="516" y="73" width="1" height="132" fill="#c8c8c8"/><rect x="61" y="223" width="470" height="90" fill="#800000"/><rect x="61" y="313" width="470" height="42" fill="#008000"/><rect x="72" y="223" width="1" height="133" fill="#000090"/><rect x="82" y="223" width="1" height="133" fill="#000090"/><rect x="93" y="223" width="1" height="133" fill="#000090"/><rect x="103" y="223" width="1" height="133" fill="#000090"/><rect x="113" y="223" width="1" height="133" fill="#0000ff"/><rect x="124" y="223" width="1" height="133" fill="#000090"/><rect x="134" y="223" width="1" height="133" fill="#000090"/><rect x="145" y="223" width="1" height="133" fill="#000090"/><rect x="155" y="223" width="1" height="133" fill="#000090"/><rect x="165" y="223" width="1" height="133" fill="#0000ff"/><rect x="176" y="223" width="1" height="133" fill="#000090"/><rect x="186" y="223" width="1" height="133" fill="#000090"/><rect x="196" y="223" width="1" height="133" fill="#000090"/><rect x="207" y="223" width="1" height="133" fill="#000090"/><rect x="217" y="223" width="1" height="133" fill="#0000ff"/><rect x="228" y="223" width="1" height="133" fill="#000090"/><rect x="238" y="223" width="1" height="133" fill="#000090"/><rect x="248" y="223" width="1" height="133" fill="#000090"/><rect x="259" y="223" width="1" height="133" fill="#000090"/><rect x="269" y="223" width="1" height="133" fill="#0000ff"/><rect x="279" y="223" width="1" height="133" fill="#000090"/><rect x="290" y="223" width="1" height="133" fill="#000090"/><rect x="300" y="223" width="1" height="133" fill="#000090"/><rect x="311" y="223" width="1" height="133" fill="#000090"/><rect x="321" y="223" width="1" height="133" fill="#0000ff"/><rect x="331" y="223" width="1" height="133" fill="#000090"/><rect x="342" y="223" width="1" height="133" fill="#000090"/><rect x="352" y="223" width="1" height="133" fill="#000090"/><rect x="362" y="223" width="1" height="133" fill="#000090"/><rect x="373" y="223" width="1" height="133" fill="#0000ff"/><rect x="383" y="223" width="1" height="133" fill="#000090"/><rect x="394" y="223" width="1" height="133" fill="#000090"/><rect x="404" y="223" width="1" height="133" fill="#000090"/><rect x="414" y="223" width="1" height="133" fill="#000090"/><rect x="425" y="223" width="1" height="133" fill="#0000ff"/><rect x="435" y="223" width="1" height="133" fill="#000090"/><rect x="445" y="223" width="1" height="133" fill="#000090"/><rect x="456" y="223" width="1" height="133" fill="#000090"/><rect x="466" y="223" width="1" height="133" fill="#000090"/><rect x="477" y="223" width="1" height="133" fill="#0000ff"/><rect x="487" y="223" width="1" height="133" fill="#000090"/><rect x="497" y="223" width="1" height="133" fill="#000090"/><rect x="508" y="223" width="1" height="133" fill="#000090"/><rect x="518" y="223" width="1" height="133" fill="#000090"/><rect x="61" y="223" width="470" height="1" fill="#0000ff"/><rect x="61" y="237" width="470" height="1" fill="#000090"/><rect x="61" y="250" width="470" height="1" fill="#0000ff"/><rect x="61" y="263" width="470" height="1" fill="#000090"/><rect x="61" y="276" width="470" height="1" fill="#0000ff"/><rect x="61" y="289" width="470" height="1" fill="#000090"/><rect x="61" y="302" width="470" height="1" fill="#0000ff"/><rect x="61" y="315" width="470" height="1" fill="#000090"/><rect x="61" y="328" width="470" height="1" fill="#0000ff"/><rect x="61" y="341" width="470" height="1" fill="#000090"/><rect x="61" y="354" width="470" height="1" fill="#0000ff"/><rect x="59" y="223" width="2" height="1" fill="#0000ff"/><rect x="60" y="237" width="1" height="1" fill="#0000ff"/><rect x="59" y="250" width="2" height="1" fill="#0000ff"/><rect x="60" y="263" width="1" height="1" fill="#0000ff"/><rect x="59" y="276" width="2" height="1" fill="#0000ff"/><rect x="60" y="289" width="1" height="1" fill="#0000ff"/><rect x="59" y="302" width="2" height="1" fill="#0000ff"/><rect x="60" y="315" width="1" height="1" fill="#0000ff"/><rect x="59" y="328" width="2" height="1" fill="#0000ff"/><rect x="60" y="341" width="1" height="1" fill="#0000ff"/><rect x="59" y="354" width="2" height="1" fill="#0000ff"/><rect x="82" y="334" width="1" height="21" fill="#ffff00"/><rect x="83" y="334" width="1" height="21" fill="#ffff00"/><rect x="84" y="339" width="1" height="16" fill="#ffff00"/><rect x="93" y="349" width="1" height="6" fill="#ffff00"/><rect x="99" y="347" width="1" height="8" fill="#ffff00"/><rect x="100" y="351" width="1" height="4" fill="#ffff00"/><rect x="101" y="351" width="1" height="4" fill="#ffff00"/><rect x="107" y="345" width="1" height="10" fill="#ffff00"/><rect x="108" y="341" width="1" height="14" fill="#ffff00"/><rect x="109" y="338" width="1" height="17" fill="#ffff00"/><rect x="110" y="340" width="1" height="15" fill="#ffff00"/><rect x="111" y="341" width="1" height="14" fill="#ffff00"/><rect x="112" y="346" width="1" height="9" fill="#ffff00"/><rect x="113" y="349" width="1" height="6" fill="#ffff00"/><rect x="114" y="351" width="1" height="4" fill="#ffff00"/><rect x="115" y="352" width="1" height="3" fill="#ffff00"/><rect x="140" y="341" width="1" height="14" fill="#ffff00"/><rect x="146" y="352" width="1" height="3" fill="#ffff00"/><rect x="149" y="351" width="1" height="4" fill="#ffff00"/><rect x="151" y="339" width="1" height="16" fill="#ffff00"/><rect x="152" y="345" width="1" height="10" fill="#ffff00"/><rect x="178" y="345" width="1" height="10" fill="#ffff00"/><rect x="179" y="338" width="1" height="17" fill="#ffff00"/><rect x="180" y="334" width="1" height="21" fill="#ffff00"/><rect x="181" y="334" width="1" height="21" fill="#ffff00"/><rect x="182" y="336" width="1" height="19" fill="#ffff00"/><rect x="183" y="338" width="1" height="17" fill="#ffff00"/><rect x="184" y="342" width="1" height="13" fill="#ffff00"/><rect x="185" y="348" width="1" height="7" fill="#ffff00"/><rect x="192" y="352" width="1" height="3" fill="#ffff00"/><rect x="228" y="341" width="1" height="14" fill="#ffff00"/><rect x="229" y="344" width="1" height="11" fill="#ffff00"/><rect x="231" y="352" width="1" height="3" fill="#ffff00"/><rect x="238" y="352" width="1" height="3" fill="#ffff00"/><rect x="289" y="352" width="1" height="3" fill="#ffff00"/><rect x="294" y="349" width="1" height="6" fill="#ffff00"/><rect x="295" y="347" width="1" height="8" fill="#ffff00"/><rect x="316" y="352" width="1" height="3" fill="#ffff00"/><rect x="327" y="347" width="1" height="8" fill="#ffff00"/><rect x="360" y="341" width="1" height="14" fill="#ffff00"/><rect x="361" y="347" width="1" height="8" fill="#ffff00"/><rect x="362" y="352" width="1" height="3" fill="#ffff00"/><rect x="390" y="347" width="1" height="8" fill="#ffff00"/><rect x="403" y="352" width="1" height="3" fill="#ffff00"/><rect x="411" y="344" width="1" height="11" fill="#ffff00"/><rect x="412" y="344" width="1" height="11" fill="#ffff00"/><rect x="413" y="344" width="1" height="11" fill="#ffff00"/><rect x="427" y="348" width="1" height="7" fill="#ffff00"/><rect x="450" y="349" width="1" height="6" fill="#ffff00"/><rect x="452" y="352" width="1" height="3" fill="#ffff00"/><rect x="453" y="352" width="1" height="3" fill="#ffff00"/><rect x="454" y="352" width="1" height="3" fill="#ffff00"/><rect x="463" y="344" width="1" height="11" fill="#ffff00"/><rect x="464" y="344" width="1" height="11" fill="#ffff00"/><rect x="465" y="344" width="1" height="11" fill="#ffff00"/><rect x="466" y="344" width="1" height="11" fill="#ffff00"/><rect x="467" y="344" width="1" height="11" fill="#ffff00"/><rect x="468" y="334" width="1" height="21" fill="#ffff00"/><rect x="469" y="334" width="1" height="21" fill="#ffff00"/><rect x="470" y="337" width="1" height="18" fill="#ffff00"/><rect x="471" y="344" width="1" height="11" fill="#ffff00"/><rect x="472" y="344" width="1" height="11" fill="#ffff00"/><rect x="473" y="344" width="1" height="11" fill="#ffff00"/><rect x="474" y="349" width="1" height="6" fill="#ffff00"/><rect x="475" y="350" width="1" height="5" fill="#ffff00"/><rect x="476" y="351" width="1" height="4" fill="#ffff00"/><rect x="477" y="350" width="1" height="5" fill="#ffff00"/><rect x="478" y="352" width="1" height="3" fill="#ffff00"/><rect x="483" y="353" width="1" height="2" fill="#ffff00"/><rect x="488" y="336" width="1" height="19" fill="#ffff00"/><rect x="489" y="336" width="1" height="19" fill="#ffff00"/><rect x="490" y="340" width="1" height="15" fill="#ffff00"/><rect x="494" y="336" width="1" height="19" fill="#ffff00"/><rect x="497" y="341" width="1" height="14" fill="#ffff00"/><rect x="498" y="343" width="1" height="12" fill="#ffff00"/><rect x="499" y="341" width="1" height="14" fill="#ffff00"/><rect x="500" y="344" width="1" height="11" fill="#ffff00"/><rect x="501" y="342" width="1" height="13" fill="#ffff00"/><rect x="502" y="331" width="1" height="24" fill="#ffff00"/><rect x="503" y="340" width="1" height="15" fill="#ffff00"/><rect x="504" y="338" width="1" height="17" fill="#ffff00"/><rect x="505" y="305" width="1" height="50" fill="#ffff00"/><rect x="506" y="335" width="1" height="20" fill="#ffff00"/><rect x="507" y="332" width="1" height="23" fill="#ffff00"/><rect x="508" y="292" width="1" height="63" fill="#ffff00"/><rect x="509" y="300" width="1" height="55" fill="#ffff00"/><rect x="510" y="315" width="1" height="40" fill="#ffff00"/><rect x="511" y="288" width="1" height="67" fill="#ffff00"/><rect x="512" y="330" width="1" height="25" fill="#ffff00"/><rect x="513" y="310" width="1" height="45" fill="#ffff00"/><rect x="514" y="283" width="1" height="72" fill="#ffff00"/><rect x="515" y="300" width="1" height="55" fill="#ffff00"/><rect x="516" y="318" width="1" height="37" fill="#ffff00"/><rect x="517" y="335" width="1" height="20" fill="#ffff00"/><rect x="62" y="304" width="1" height="2" fill="#ff00ff"/><rect x="63" y="301" width="1" height="5" fill="#ff00ff"/><rect x="64" y="301" width="1" height="3" fill="#ff00ff"/><rect x="65" y="302" width="1" height="3" fill="#ff00ff"/><rect x="66" y="303" width="1" height="3" fill="#ff00ff"/><rect x="67" y="304" width="1" height="3" fill="#ff00ff"/><rect x="68" y="304" width="1" height="3" fill="#ff00ff"/><rect x="69" y="303" width="1" height="3" fill="#ff00ff"/><rect x="70" y="303" width="1" height="5" fill="#ff00ff"/><rect x="71" y="304" width="1" height="4" fill="#ff00ff"/><rect x="72" y="304" width="1" height="3" fill="#ff00ff"/><rect x="73" y="305" width="1" height="2" fill="#ff00ff"/><rect x="74" y="305" width="1" height="2" fill="#ff00ff"/><rect x="75" y="305" width="1" height="2" fill="#ff00ff"/><rect x="76" y="304" width="1" height="3" fill="#ff00ff"/><rect x="77" y="304" width="1" height="3" fill="#ff00ff"/><rect x="78" y="301" width="1" height="6" fill="#ff00ff"/><rect x="79" y="301" width="1" height="4" fill="#ff00ff"/><rect x="80" y="303" width="1" height="6" fill="#ff00ff"/><rect x="81" y="304" width="1" height="5" fill="#ff00ff"/><rect x="82" y="304" width="1" height="2" fill="#ff00ff"/><rect x="83" y="303" width="1" height="3" fill="#ff00ff"/><rect x="84" y="303" width="1" height="4" fill="#ff00ff"/><rect x="85" y="302" width="1" height="5" fill="#ff00ff"/><rect x="86" y="302" width="1" height="3" fill="#ff00ff"/><rect x="87" y="303" width="1" height="3" fill="#ff00ff"/><rect x="88" y="303" width="1" height="3" fill="#ff00ff"/><rect x="89" y="303" width="1" height="3" fill="#ff00ff"/><rect x="90" y="304" width="1" height="2" fill="#ff00ff"/><rect x="91" y="304" width="1" height="2" fill="#ff00ff"/><rect x="92" y="303" width="1" height="3" fill="#ff00ff"/><rect x="93" y="303" width="1" height="4" fill="#ff00ff"/><rect x="94" y="302" width="1" height="5" fill="#ff00ff"/><rect x="95" y="302" width="1" height="2" fill="#ff00ff"/><rect x="96" y="302" width="1" height="4" fill="#ff00ff"/><rect x="97" y="304" width="1" height="2" fill="#ff00ff"/><rect x="98" y="304" width="1" height="3" fill="#ff00ff"/><rect x="99" y="303" width="1" height="4" fill="#ff00ff"/><rect x="100" y="303" width="1" height="3" fill="#ff00ff"/><rect x="101" y="304" width="1" height="2" fill="#ff00ff"/><rect x="102" y="303" width="1" height="3" fill="#ff00ff"/><rect x="103" y="302" width="1" height="3" fill="#ff00ff"/><rect x="104" y="301" width="1" height="3" fill="#ff00ff"/><rect x="105" y="301" width="1" height="6" fill="#ff00ff"/><rect x="106" y="305" width="1" height="2" fill="#ff00ff"/><rect x="107" y="304" width="1" height="3" fill="#ff00ff"/><rect x="108" y="303" width="1" height="3" fill="#ff00ff"/><rect x="109" y="302" width="1" height="3" fill="#ff00ff"/><rect x="110" y="302" width="1" height="3" fill="#ff00ff"/><rect x="111" y="303" width="1" height="2" fill="#ff00ff"/><rect x="112" y="303" width="1" height="3" fill="#ff00ff"/><rect x="113" y="303" width="1" height="3" fill="#ff00ff"/><rect x="114" y="303" width="1" height="2" fill="#ff00ff"/><rect x="115" y="303" width="1" height="3" fill="#ff00ff"/><rect x="116" y="304" width="1" height="2" fill="#ff00ff"/><rect x="117" y="302" width="1" height="4" fill="#ff00ff"/><rect x="118" y="302" width="1" height="4" fill="#ff00ff"/><rect x="119" y="302" width="1" height="4" fill="#ff00ff"/><rect x="120" y="302" width="1" height="4" fill="#ff00ff"/><rect x="121" y="303" width="1" height="3" fill="#ff00ff"/><rect x="122" y="302" width="1" height="3" fill="#ff00ff"/><rect x="123" y="302" width="1" height="4" fill="#ff00ff"/><rect x="124" y="303" width="1" height="3" fill="#ff00ff"/><rect x="125" y="303" width="1" height="3" fill="#ff00ff"/><rect x="126" y="303" width="1" height="3" fill="#ff00ff"/><rect x="127" y="302" width="1" height="3" fill="#ff00ff"/><rect x="128" y="302" width="1" height="5" fill="#ff00ff"/><rect x="129" y="302" width="1" height="5" fill="#ff00ff"/><rect x="130" y="302" width="1" height="4" fill="#ff00ff"/><rect x="131" y="303" width="1" height="3" fill="#ff00ff"/><rect x="132" y="303" width="1" height="3" fill="#ff00ff"/><rect x="133" y="304" width="1" height="2" fill="#ff00ff"/><rect x="134" y="304" width="1" height="2" fill="#ff00ff"/><rect x="135" y="304" width="1" height="3" fill="#ff00ff"/><rect x="136" y="303" width="1" height="4" fill="#ff00ff"/><rect x="137" y="303" width="1" height="3" fill="#ff00ff"/><rect x="138" y="300" width="1" height="6" fill="#ff00ff"/><rect x="139" y="300" width="1" height="8" fill="#ff00ff"/><rect x="140" y="303" width="1" height="5" fill="#ff00ff"/><rect x="141" y="303" width="1" height="2" fill="#ff00ff"/><rect x="142" y="303" width="1" height="6" fill="#ff00ff"/><rect x="143" y="303" width="1" height="6" fill="#ff00ff"/><rect x="144" y="303" width="1" height="5" fill="#ff00ff"/><rect x="145" y="304" width="1" height="4" fill="#ff00ff"/><rect x="146" y="301" width="1" height="5" fill="#ff00ff"/><rect x="147" y="301" width="1" height="2" fill="#ff00ff"/><rect x="148" y="301" width="1" height="3" fill="#ff00ff"/><rect x="149" y="302" width="1" height="2" fill="#ff00ff"/><rect x="150" y="302" width="1" height="3" fill="#ff00ff"/><rect x="151" y="303" width="1" height="2" fill="#ff00ff"/><rect x="152" y="303" width="1" height="3" fill="#ff00ff"/><rect x="153" y="303" width="1" height="3" fill="#ff00ff"/><rect x="154" y="303" width="1" height="3" fill="#ff00ff"/><rect x="155" y="303" width="1" height="3" fill="#ff00ff"/><rect x="156" y="303" width="1" height="3" fill="#ff00ff"/><rect x="157" y="303" width="1" height="3" fill="#ff00ff"/><rect x="158" y="302" width="1" height="3" fill="#ff00ff"/><rect x="159" y="302" width="1" height="4" fill="#ff00ff"/><rect x="160" y="304" width="1" height="4" fill="#ff00ff"/><rect x="161" y="304" width="1" height="4" fill="#ff00ff"/><rect x="162" y="304" width="1" height="3" fill="#ff00ff"/><rect x="163" y="302" width="1" height="5" fill="#ff00ff"/><rect x="164" y="302" width="1" height="4" fill="#ff00ff"/><rect x="165" y="304" width="1" height="2" fill="#ff00ff"/><rect x="166" y="304" width="1" height="2" fill="#ff00ff"/><rect x="167" y="302" width="1" height="4" fill="#ff00ff"/><rect x="168" y="300" width="1" height="4" fill="#ff00ff"/><rect x="169" y="300" width="1" height="5" fill="#ff00ff"/><rect x="170" y="303" width="1" height="3" fill="#ff00ff"/><rect x="171" y="302" width="1" height="4" fill="#ff00ff"/><rect x="172" y="302" width="1" height="3" fill="#ff00ff"/><rect x="173" y="303" width="1" height="4" fill="#ff00ff"/><rect x="174" y="303" width="1" height="4" fill="#ff00ff"/><rect x="175" y="302" width="1" height="3" fill="#ff00ff"/><rect x="176" y="301" width="1" height="3" fill="#ff00ff"/><rect x="177" y="301" width="1" height="4" fill="#ff00ff"/><rect x="178" y="303" width="1" height="2" fill="#ff00ff"/><rect x="179" y="303" width="1" height="3" fill="#ff00ff"/><rect x="180" y="302" width="1" height="4" fill="#ff00ff"/><rect x="181" y="302" width="1" height="2" fill="#ff00ff"/><rect x="182" y="302" width="1" height="4" fill="#ff00ff"/><rect x="183" y="302" width="1" height="4" fill="#ff00ff"/><rect x="184" y="300" width="1" height="4" fill="#ff00ff"/><rect x="185" y="300" width="1" height="5" fill="#ff00ff"/><rect x="186" y="303" width="1" height="3" fill="#ff00ff"/><rect x="187" y="303" width="1" height="3" fill="#ff00ff"/><rect x="188" y="303" width="1" height="2" fill="#ff00ff"/><rect x="189" y="303" width="1" height="3" fill="#ff00ff"/><rect x="190" y="304" width="1" height="2" fill="#ff00ff"/><rect x="191" y="302" width="1" height="4" fill="#ff00ff"/><rect x="192" y="302" width="1" height="3" fill="#ff00ff"/><rect x="193" y="302" width="1" height="3" fill="#ff00ff"/><rect x="194" y="302" width="1" height="4" fill="#ff00ff"/><rect x="195" y="302" width="1" height="4" fill="#ff00ff"/><rect x="196" y="302" width="1" height="2" fill="#ff00ff"/><rect x="197" y="302" width="1" height="4" fill="#ff00ff"/><rect x="198" y="303" width="1" height="3" fill="#ff00ff"/><rect x="199" y="302" width="1" height="3" fill="#ff00ff"/><rect x="200" y="302" width="1" height="3" fill="#ff00ff"/><rect x="201" y="303" width="1" height="2" fill="#ff00ff"/><rect x="202" y="301" width="1" height="4" fill="#ff00ff"/><rect x="203" y="301" width="1" height="3" fill="#ff00ff"/><rect x="204" y="302" width="1" height="2" fill="#ff00ff"/><rect x="205" y="302" width="1" height="4" fill="#ff00ff"/><rect x="206" y="300" width="1" height="6" fill="#ff00ff"/><rect x="207" y="300" width="1" height="4" fill="#ff00ff"/><rect x="208" y="301" width="1" height="3" fill="#ff00ff"/><rect x="209" y="301" width="1" height="5" fill="#ff00ff"/><rect x="210" y="299" width="1" height="7" fill="#ff00ff"/><rect x="211" y="299" width="1" height="5" fill="#ff00ff"/><rect x="212" y="301" width="1" height="3" fill="#ff00ff"/><rect x="213" y="300" width="1" height="3" fill="#ff00ff"/><rect x="214" y="300" width="1" height="3" fill="#ff00ff"/><rect x="215" y="301" width="1" height="5" fill="#ff00ff"/><rect x="216" y="303" width="1" height="3" fill="#ff00ff"/><rect x="217" y="303" width="1" height="2" fill="#ff00ff"/><rect x="218" y="302" width="1" height="3" fill="#ff00ff"/><rect x="219" y="302" width="1" height="2" fill="#ff00ff"/><rect x="220" y="302" width="1" height="3" fill="#ff00ff"/><rect x="221" y="302" width="1" height="3" fill="#ff00ff"/><rect x="222" y="302" width="1" height="4" fill="#ff00ff"/><rect x="223" y="300" width="1" height="6" fill="#ff00ff"/><rect x="224" y="300" width="1" height="6" fill="#ff00ff"/><rect x="225" y="302" width="1" height="4" fill="#ff00ff"/><rect x="226" y="301" width="1" height="3" fill="#ff00ff"/><rect x="227" y="301" width="1" height="2" fill="#ff00ff"/><rect x="228" y="301" width="1" height="3" fill="#ff00ff"/><rect x="229" y="301" width="1" height="3" fill="#ff00ff"/><rect x="230" y="301" width="1" height="5" fill="#ff00ff"/><rect x="231" y="303" width="1" height="3" fill="#ff00ff"/><rect x="232" y="302" width="1" height="3" fill="#ff00ff"/><rect x="233" y="302" width="1" height="2" fill="#ff00ff"/><rect x="234" y="299" width="1" height="5" fill="#ff00ff"/><rect x="235" y="299" width="1" height="8" fill="#ff00ff"/><rect x="236" y="304" width="1" height="3" fill="#ff00ff"/><rect x="237" y="304" width="1" height="2" fill="#ff00ff"/><rect x="238" y="302" width="1" height="4" fill="#ff00ff"/><rect x="239" y="302" width="1" height="4" fill="#ff00ff"/><rect x="240" y="304" width="1" height="2" fill="#ff00ff"/><rect x="241" y="304" width="1" height="2" fill="#ff00ff"/><rect x="242" y="302" width="1" height="4" fill="#ff00ff"/><rect x="243" y="301" width="1" height="3" fill="#ff00ff"/><rect x="244" y="301" width="1" height="3" fill="#ff00ff"/><rect x="245" y="302" width="1" height="3" fill="#ff00ff"/><rect x="246" y="301" width="1" height="4" fill="#ff00ff"/><rect x="247" y="301" width="1" height="3" fill="#ff00ff"/><rect x="248" y="302" width="1" height="2" fill="#ff00ff"/><rect x="249" y="302" width="1" height="2" fill="#ff00ff"/><rect x="250" y="302" width="1" height="2" fill="#ff00ff"/><rect x="251" y="298" width="1" height="6" fill="#ff00ff"/><rect x="252" y="298" width="1" height="6" fill="#ff00ff"/><rect x="253" y="302" width="1" height="3" fill="#ff00ff"/><rect x="254" y="300" width="1" height="5" fill="#ff00ff"/><rect x="255" y="300" width="1" height="4" fill="#ff00ff"/><rect x="256" y="301" width="1" height="3" fill="#ff00ff"/><rect x="257" y="301" width="1" height="4" fill="#ff00ff"/><rect x="258" y="303" width="1" height="2" fill="#ff00ff"/><rect x="259" y="303" width="1" height="4" fill="#ff00ff"/><rect x="260" y="301" width="1" height="6" fill="#ff00ff"/><rect x="261" y="301" width="1" height="6" fill="#ff00ff"/><rect x="262" y="301" width="1" height="6" fill="#ff00ff"/><rect x="263" y="301" width="1" height="3" fill="#ff00ff"/><rect x="264" y="301" width="1" height="3" fill="#ff00ff"/><rect x="265" y="301" width="1" height="6" fill="#ff00ff"/><rect x="266" y="305" width="1" height="2" fill="#ff00ff"/><rect x="267" y="300" width="1" height="7" fill="#ff00ff"/><rect x="268" y="300" width="1" height="5" fill="#ff00ff"/><rect x="269" y="302" width="1" height="3" fill="#ff00ff"/><rect x="270" y="302" width="1" height="3" fill="#ff00ff"/><rect x="271" y="302" width="1" height="3" fill="#ff00ff"/><rect x="272" y="301" width="1" height="3" fill="#ff00ff"/><rect x="273" y="301" width="1" height="3" fill="#ff00ff"/><rect x="274" y="301" width="1" height="3" fill="#ff00ff"/><rect x="275" y="301" width="1" height="2" fill="#ff00ff"/><rect x="276" y="301" width="1" height="4" fill="#ff00ff"/><rect x="277" y="300" width="1" height="5" fill="#ff00ff"/><rect x="278" y="300" width="1" height="3" fill="#ff00ff"/><rect x="279" y="301" width="1" height="4" fill="#ff00ff"/><rect x="280" y="303" width="1" height="3" fill="#ff00ff"/><rect x="281" y="303" width="1" height="3" fill="#ff00ff"/><rect x="282" y="302" width="1" height="3" fill="#ff00ff"/><rect x="283" y="302" width="1" height="2" fill="#ff00ff"/><rect x="284" y="302" width="1" height="3" fill="#ff00ff"/><rect x="285" y="302" width="1" height="3" fill="#ff00ff"/><rect x="286" y="301" width="1" height="3" fill="#ff00ff"/><rect x="287" y="301" width="1" height="4" fill="#ff00ff"/><rect x="288" y="300" width="1" height="5" fill="#ff00ff"/><rect x="289" y="300" width="1" height="2" fill="#ff00ff"/><rect x="290" y="300" width="1" height="5" fill="#ff00ff"/><rect x="291" y="303" width="1" height="2" fill="#ff00ff"/><rect x="292" y="301" width="1" height="4" fill="#ff00ff"/><rect x="293" y="301" width="1" height="4" fill="#ff00ff"/><rect x="294" y="302" width="1" height="3" fill="#ff00ff"/><rect x="295" y="299" width="1" height="5" fill="#ff00ff"/><rect x="296" y="299" width="1" height="3" fill="#ff00ff"/><rect x="297" y="300" width="1" height="3" fill="#ff00ff"/><rect x="298" y="301" width="1" height="3" fill="#ff00ff"/><rect x="299" y="301" width="1" height="3" fill="#ff00ff"/><rect x="300" y="301" width="1" height="2" fill="#ff00ff"/><rect x="301" y="301" width="1" height="4" fill="#ff00ff"/><rect x="302" y="303" width="1" height="2" fill="#ff00ff"/><rect x="303" y="302" width="1" height="3" fill="#ff00ff"/><rect x="304" y="302" width="1" height="3" fill="#ff00ff"/><rect x="305" y="303" width="1" height="3" fill="#ff00ff"/><rect x="306" y="301" width="1" height="5" fill="#ff00ff"/><rect x="307" y="301" width="1" height="4" fill="#ff00ff"/><rect x="308" y="303" width="1" height="2" fill="#ff00ff"/><rect x="309" y="301" width="1" height="4" fill="#ff00ff"/><rect x="310" y="301" width="1" height="5" fill="#ff00ff"/><rect x="311" y="301" width="1" height="5" fill="#ff00ff"/><rect x="312" y="299" width="1" height="4" fill="#ff00ff"/><rect x="313" y="299" width="1" height="4" fill="#ff00ff"/><rect x="314" y="301" width="1" height="3" fill="#ff00ff"/><rect x="315" y="302" width="1" height="4" fill="#ff00ff"/><rect x="316" y="301" width="1" height="5" fill="#ff00ff"/><rect x="317" y="301" width="1" height="3" fill="#ff00ff"/><rect x="318" y="301" width="1" height="3" fill="#ff00ff"/><rect x="319" y="301" width="1" height="2" fill="#ff00ff"/><rect x="320" y="300" width="1" height="3" fill="#ff00ff"/><rect x="321" y="300" width="1" height="3" fill="#ff00ff"/><rect x="322" y="301" width="1" height="2" fill="#ff00ff"/><rect x="323" y="299" width="1" height="4" fill="#ff00ff"/><rect x="324" y="299" width="1" height="4" fill="#ff00ff"/><rect x="325" y="301" width="1" height="2" fill="#ff00ff"/><rect x="326" y="301" width="1" height="2" fill="#ff00ff"/><rect x="327" y="300" width="1" height="3" fill="#ff00ff"/><rect x="328" y="300" width="1" height="4" fill="#ff00ff"/><rect x="329" y="300" width="1" height="4" fill="#ff00ff"/><rect x="330" y="300" width="1" height="3" fill="#ff00ff"/><rect x="331" y="301" width="1" height="2" fill="#ff00ff"/><rect x="332" y="301" width="1" height="3" fill="#ff00ff"/><rect x="333" y="301" width="1" height="3" fill="#ff00ff"/><rect x="334" y="301" width="1" height="2" fill="#ff00ff"/><rect x="335" y="299" width="1" height="4" fill="#ff00ff"/><rect x="336" y="299" width="1" height="6" fill="#ff00ff"/><rect x="337" y="299" width="1" height="6" fill="#ff00ff"/><rect x="338" y="299" width="1" height="3" fill="#ff00ff"/><rect x="339" y="300" width="1" height="3" fill="#ff00ff"/><rect x="340" y="301" width="1" height="2" fill="#ff00ff"/><rect x="341" y="301" width="1" height="3" fill="#ff00ff"/><rect x="342" y="302" width="1" height="2" fill="#ff00ff"/><rect x="343" y="302" width="1" height="2" fill="#ff00ff"/><rect x="344" y="300" width="1" height="4" fill="#ff00ff"/><rect x="345" y="300" width="1" height="3" fill="#ff00ff"/><rect x="346" y="301" width="1" height="4" fill="#ff00ff"/><rect x="347" y="302" width="1" height="3" fill="#ff00ff"/><rect x="348" y="299" width="1" height="5" fill="#ff00ff"/><rect x="349" y="299" width="1" height="4" fill="#ff00ff"/><rect x="350" y="298" width="1" height="5" fill="#ff00ff"/><rect x="351" y="298" width="1" height="5" fill="#ff00ff"/><rect x="352" y="299" width="1" height="4" fill="#ff00ff"/><rect x="353" y="299" width="1" height="2" fill="#ff00ff"/><rect x="354" y="299" width="1" height="3" fill="#ff00ff"/><rect x="355" y="300" width="1" height="2" fill="#ff00ff"/><rect x="356" y="300" width="1" height="2" fill="#ff00ff"/><rect x="357" y="300" width="1" height="3" fill="#ff00ff"/><rect x="358" y="301" width="1" height="3" fill="#ff00ff"/><rect x="359" y="301" width="1" height="3" fill="#ff00ff"/><rect x="360" y="301" width="1" height="3" fill="#ff00ff"/><rect x="361" y="298" width="1" height="6" fill="#ff00ff"/><rect x="362" y="298" width="1" height="5" fill="#ff00ff"/><rect x="363" y="300" width="1" height="3" fill="#ff00ff"/><rect x="364" y="300" width="1" height="2" fill="#ff00ff"/><rect x="365" y="300" width="1" height="2" fill="#ff00ff"/><rect x="366" y="300" width="1" height="2" fill="#ff00ff"/><rect x="367" y="300" width="1" height="3" fill="#ff00ff"/><rect x="368" y="300" width="1" height="3" fill="#ff00ff"/><rect x="369" y="300" width="1" height="2" fill="#ff00ff"/><rect x="370" y="300" width="1" height="3" fill="#ff00ff"/><rect x="371" y="300" width="1" height="3" fill="#ff00ff"/><rect x="372" y="300" width="1" height="2" fill="#ff00ff"/><rect x="373" y="300" width="1" height="3" fill="#ff00ff"/><rect x="374" y="299" width="1" height="4" fill="#ff00ff"/><rect x="375" y="299" width="1" height="2" fill="#ff00ff"/><rect x="376" y="299" width="1" height="5" fill="#ff00ff"/><rect x="377" y="300" width="1" height="4" fill="#ff00ff"/><rect x="378" y="298" width="1" height="4" fill="#ff00ff"/><rect x="379" y="298" width="1" height="4" fill="#ff00ff"/><rect x="380" y="300" width="1" height="2" fill="#ff00ff"/><rect x="381" y="300" width="1" height="4" fill="#ff00ff"/><rect x="382" y="300" width="1" height="4" fill="#ff00ff"/><rect x="383" y="299" width="1" height="3" fill="#ff00ff"/><rect x="384" y="299" width="1" height="2" fill="#ff00ff"/><rect x="385" y="298" width="1" height="3" fill="#ff00ff"/><rect x="386" y="298" width="1" height="2" fill="#ff00ff"/><rect x="387" y="298" width="1" height="3" fill="#ff00ff"/><rect x="388" y="298" width="1" height="3" fill="#ff00ff"/><rect x="389" y="298" width="1" height="5" fill="#ff00ff"/><rect x="390" y="301" width="1" height="3" fill="#ff00ff"/><rect x="391" y="300" width="1" height="4" fill="#ff00ff"/><rect x="392" y="300" width="1" height="2" fill="#ff00ff"/><rect x="393" y="300" width="1" height="2" fill="#ff00ff"/><rect x="394" y="299" width="1" height="3" fill="#ff00ff"/><rect x="395" y="299" width="1" height="2" fill="#ff00ff"/><rect x="396" y="299" width="1" height="3" fill="#ff00ff"/><rect x="397" y="298" width="1" height="4" fill="#ff00ff"/><rect x="398" y="298" width="1" height="2" fill="#ff00ff"/><rect x="399" y="298" width="1" height="4" fill="#ff00ff"/><rect x="400" y="300" width="1" height="2" fill="#ff00ff"/><rect x="401" y="298" width="1" height="4" fill="#ff00ff"/><rect x="402" y="297" width="1" height="3" fill="#ff00ff"/><rect x="403" y="296" width="1" height="3" fill="#ff00ff"/><rect x="404" y="296" width="1" height="2" fill="#ff00ff"/><rect x="405" y="296" width="1" height="6" fill="#ff00ff"/><rect x="406" y="297" width="1" height="5" fill="#ff00ff"/><rect x="407" y="297" width="1" height="3" fill="#ff00ff"/><rect x="408" y="297" width="1" height="3" fill="#ff00ff"/><rect x="409" y="297" width="1" height="4" fill="#ff00ff"/><rect x="410" y="298" width="1" height="3" fill="#ff00ff"/><rect x="411" y="298" width="1" height="3" fill="#ff00ff"/><rect x="412" y="299" width="1" height="4" fill="#ff00ff"/><rect x="413" y="299" width="1" height="4" fill="#ff00ff"/><rect x="414" y="298" width="1" height="3" fill="#ff00ff"/><rect x="415" y="298" width="1" height="3" fill="#ff00ff"/><rect x="416" y="299" width="1" height="2" fill="#ff00ff"/><rect x="417" y="299" width="1" height="3" fill="#ff00ff"/><rect x="418" y="298" width="1" height="4" fill="#ff00ff"/><rect x="419" y="296" width="1" height="4" fill="#ff00ff"/><rect x="420" y="296" width="1" height="2" fill="#ff00ff"/><rect x="421" y="296" width="1" height="4" fill="#ff00ff"/><rect x="422" y="298" width="1" height="2" fill="#ff00ff"/><rect x="423" y="298" width="1" height="3" fill="#ff00ff"/><rect x="424" y="298" width="1" height="3" fill="#ff00ff"/><rect x="425" y="298" width="1" height="3" fill="#ff00ff"/><rect x="426" y="297" width="1" height="4" fill="#ff00ff"/><rect x="427" y="296" width="1" height="3" fill="#ff00ff"/><rect x="428" y="296" width="1" height="3" fill="#ff00ff"/><rect x="429" y="297" width="1" height="4" fill="#ff00ff"/><rect x="430" y="298" width="1" height="3" fill="#ff00ff"/><rect x="431" y="298" width="1" height="4" fill="#ff00ff"/><rect x="432" y="296" width="1" height="6" fill="#ff00ff"/><rect x="433" y="295" width="1" height="3" fill="#ff00ff"/><rect x="434" y="295" width="1" height="6" fill="#ff00ff"/><rect x="435" y="297" width="1" height="4" fill="#ff00ff"/><rect x="436" y="294" width="1" height="5" fill="#ff00ff"/><rect x="437" y="294" width="1" height="7" fill="#ff00ff"/><rect x="438" y="296" width="1" height="5" fill="#ff00ff"/><rect x="439" y="296" width="1" height="3" fill="#ff00ff"/><rect x="440" y="296" width="1" height="3" fill="#ff00ff"/><rect x="441" y="296" width="1" height="3" fill="#ff00ff"/><rect x="442" y="296" width="1" height="3" fill="#ff00ff"/><rect x="443" y="296" width="1" height="2" fill="#ff00ff"/><rect x="444" y="296" width="1" height="3" fill="#ff00ff"/><rect x="445" y="296" width="1" height="3" fill="#ff00ff"/><rect x="446" y="296" width="1" height="5" fill="#ff00ff"/><rect x="447" y="296" width="1" height="5" fill="#ff00ff"/><rect x="448" y="296" width="1" height="2" fill="#ff00ff"/><rect x="449" y="292" width="1" height="6" fill="#ff00ff"/><rect x="450" y="292" width="1" height="7" fill="#ff00ff"/><rect x="451" y="292" width="1" height="7" fill="#ff00ff"/><rect x="452" y="292" width="1" height="7" fill="#ff00ff"/><rect x="453" y="296" width="1" height="3" fill="#ff00ff"/><rect x="454" y="293" width="1" height="5" fill="#ff00ff"/><rect x="455" y="293" width="1" height="7" fill="#ff00ff"/><rect x="456" y="292" width="1" height="8" fill="#ff00ff"/><rect x="457" y="292" width="1" height="2" fill="#ff00ff"/><rect x="458" y="292" width="1" height="2" fill="#ff00ff"/><rect x="459" y="292" width="1" height="7" fill="#ff00ff"/><rect x="460" y="297" width="1" height="2" fill="#ff00ff"/><rect x="461" y="295" width="1" height="4" fill="#ff00ff"/><rect x="462" y="288" width="1" height="9" fill="#ff00ff"/><rect x="463" y="288" width="1" height="10" fill="#ff00ff"/><rect x="464" y="293" width="1" height="5" fill="#ff00ff"/><rect x="465" y="293" width="1" height="2" fill="#ff00ff"/><rect x="466" y="292" width="1" height="3" fill="#ff00ff"/><rect x="467" y="292" width="1" height="2" fill="#ff00ff"/><rect x="468" y="286" width="1" height="8" fill="#ff00ff"/><rect x="469" y="277" width="1" height="11" fill="#ff00ff"/><rect x="470" y="277" width="1" height="11" fill="#ff00ff"/><rect x="471" y="286" width="1" height="8" fill="#ff00ff"/><rect x="472" y="292" width="1" height="5" fill="#ff00ff"/><rect x="473" y="291" width="1" height="6" fill="#ff00ff"/><rect x="474" y="291" width="1" height="6" fill="#ff00ff"/><rect x="475" y="295" width="1" height="2" fill="#ff00ff"/><rect x="476" y="294" width="1" height="3" fill="#ff00ff"/><rect x="477" y="290" width="1" height="6" fill="#ff00ff"/><rect x="478" y="290" width="1" height="4" fill="#ff00ff"/><rect x="479" y="292" width="1" height="2" fill="#ff00ff"/><rect x="480" y="289" width="1" height="5" fill="#ff00ff"/><rect x="481" y="289" width="1" height="9" fill="#ff00ff"/><rect x="482" y="295" width="1" height="3" fill="#ff00ff"/><rect x="483" y="292" width="1" height="5" fill="#ff00ff"/><rect x="484" y="289" width="1" height="5" fill="#ff00ff"/><rect x="485" y="289" width="1" height="8" fill="#ff00ff"/><rect x="486" y="288" width="1" height="9" fill="#ff00ff"/><rect x="487" y="288" width="1" height="5" fill="#ff00ff"/><rect x="488" y="288" width="1" height="5" fill="#ff00ff"/><rect x="489" y="288" width="1" height="5" fill="#ff00ff"/><rect x="490" y="291" width="1" height="4" fill="#ff00ff"/><rect x="491" y="288" width="1" height="7" fill="#ff00ff"/><rect x="492" y="288" width="1" height="8" fill="#ff00ff"/><rect x="493" y="290" width="1" height="6" fill="#ff00ff"/><rect x="494" y="290" width="1" height="4" fill="#ff00ff"/><rect x="495" y="292" width="1" height="3" fill="#ff00ff"/><rect x="496" y="292" width="1" height="3" fill="#ff00ff"/><rect x="497" y="286" width="1" height="8" fill="#ff00ff"/><rect x="498" y="286" width="1" height="8" fill="#ff00ff"/><rect x="499" y="292" width="1" height="2" fill="#ff00ff"/><rect x="500" y="290" width="1" height="4" fill="#ff00ff"/><rect x="501" y="290" width="1" height="2" fill="#ff00ff"/><rect x="502" y="288" width="1" height="4" fill="#ff00ff"/><rect x="503" y="287" width="1" height="3" fill="#ff00ff"/><rect x="504" y="284" width="1" height="5" fill="#ff00ff"/><rect x="505" y="284" width="1" height="6" fill="#ff00ff"/><rect x="506" y="285" width="1" height="5" fill="#ff00ff"/><rect x="507" y="285" width="1" height="8" fill="#ff00ff"/><rect x="508" y="291" width="1" height="3" fill="#ff00ff"/><rect x="509" y="288" width="1" height="6" fill="#ff00ff"/><rect x="510" y="288" width="1" height="2" fill="#ff00ff"/><rect x="511" y="281" width="1" height="9" fill="#ff00ff"/><rect x="512" y="281" width="1" height="8" fill="#ff00ff"/><rect x="513" y="276" width="1" height="13" fill="#ff00ff"/><rect x="514" y="266" width="1" height="12" fill="#ff00ff"/><rect x="515" y="266" width="1" height="24" fill="#ff00ff"/><rect x="516" y="285" width="1" height="5" fill="#ff00ff"/><rect x="517" y="285" width="1" height="2" fill="#ff00ff"/><rect x="18" y="374" width="170" height="1" fill="#808080"/><rect x="18" y="436" width="170" height="1" fill="#808080"/><rect x="18" y="374" width="1" height="63" fill="#808080"/><rect x="187" y="374" width="1" height="63" fill="#808080"/><rect x="27" y="368" width="63" height="12" fill="#ffffff"/><rect x="198" y="374" width="170" height="1" fill="#808080"/><rect x="198" y="436" width="170" height="1" fill="#808080"/><rect x="198" y="374" width="1" height="63" fill="#808080"/><rect x="367" y="374" width="1" height="63" fill="#808080"/><rect x="207" y="368" width="72" height="12" fill="#ffffff"/><rect x="379" y="374" width="170" height="1" fill="#808080"/><rect x="379" y="420" width="170" height="1" fill="#808080"/><rect x="379" y="374" width="1" height="47" fill="#808080"/><rect x="548" y="374" width="1" height="47" fill="#808080"/><rect x="388" y="368" width="41" height="12" fill="#ffffff"/><rect x="28" y="371" width="8" height="8" fill="#000000"/><rect x="29" y="372" width="6" height="6" fill="#00ffff"/><rect x="208" y="371" width="8" height="8" fill="#000000"/><rect x="209" y="372" width="6" height="6" fill="#ffff00"/><rect x="389" y="371" width="8" height="8" fill="#000000"/><rect x="390" y="372" width="6" height="6" fill="#ff00ff"/><rect x="564" y="88" width="158" height="1" fill="#c0c0c0"/><rect x="722" y="89" width="1" height="2" fill="#c0c0c0"/><rect x="564" y="156" width="158" height="1" fill="#c0c0c0"/><rect x="722" y="154" width="1" height="2" fill="#c0c0c0"/><rect x="561" y="91" width="1" height="63" fill="#c0c0c0"/><rect x="562" y="90" width="1" height="1" fill="#c0c0c0"/><rect x="563" y="89" width="1" height="1" fill="#c0c0c0"/><rect x="562" y="154" width="1" height="1" fill="#c0c0c0"/><rect x="563" y="155" width="1" height="1" fill="#c0c0c0"/><rect x="564" y="161" width="158" height="1" fill="#c0c0c0"/><rect x="722" y="162" width="1" height="2" fill="#c0c0c0"/><rect x="564" y="339" width="158" height="1" fill="#c0c0c0"/><rect x="722" y="337" width="1" height="2" fill="#c0c0c0"/><rect x="561" y="164" width="1" height="173" fill="#c0c0c0"/><rect x="562" y="163" width="1" height="1" fill="#c0c0c0"/><rect x="563" y="162" width="1" height="1" fill="#c0c0c0"/><rect x="562" y="337" width="1" height="1" fill="#c0c0c0"/><rect x="563" y="338" width="1" height="1" fill="#c0c0c0"/><rect x="564" y="344" width="158" height="1" fill="#c0c0c0"/><rect x="722" y="345" width="1" height="2" fill="#c0c0c0"/><rect x="564" y="366" width="158" height="1" fill="#c0c0c0"/><rect x="722" y="364" width="1" height="2" fill="#c0c0c0"/><rect x="561" y="347" width="1" height="17" fill="#c0c0c0"/><rect x="562" y="346" width="1" height="1" fill="#c0c0c0"/><rect x="563" y="345" width="1" height="1" fill="#c0c0c0"/><rect x="562" y="364" width="1" height="1" fill="#c0c0c0"/><rect x="563" y="365" width="1" height="1" fill="#c0c0c0"/><rect x="564" y="374" width="158" height="1" fill="#c0c0c0"/><rect x="722" y="375" width="1" height="2" fill="#c0c0c0"/><rect x="564" y="436" width="158" height="1" fill="#c0c0c0"/><rect x="722" y="434" width="1" height="2" fill="#c0c0c0"/><rect x="561" y="377" width="1" height="57" fill="#c0c0c0"/><rect x="562" y="376" width="1" height="1" fill="#c0c0c0"/><rect x="563" y="375" width="1" height="1" fill="#c0c0c0"/><rect x="562" y="434" width="1" height="1" fill="#c0c0c0"/><rect x="563" y="435" width="1" height="1" fill="#c0c0c0"/><rect x="568" y="80" width="62" height="12" fill="#ffffff"/><rect x="568" y="154" width="46" height="12" fill="#ffffff"/><rect x="631" y="170" width="82" height="1" fill="#808080"/><rect x="631" y="189" width="82" height="1" fill="#808080"/><rect x="631" y="170" width="1" height="20" fill="#808080"/><rect x="712" y="170" width="1" height="20" fill="#808080"/><rect x="632" y="171" width="80" height="18" fill="#ffffff"/><rect x="695" y="171" width="17" height="18" fill="#808080"/><rect x="696" y="172" width="15" height="16" fill="#d8d8d8"/><rect x="696" y="180" width="15" height="8" fill="#b8b8b8"/><rect x="631" y="194" width="70" height="1" fill="#808080"/><rect x="631" y="211" width="70" height="1" fill="#808080"/><rect x="631" y="194" width="1" height="18" fill="#808080"/><rect x="700" y="194" width="1" height="18" fill="#808080"/><rect x="631" y="217" width="70" height="1" fill="#808080"/><rect x="631" y="234" width="70" height="1" fill="#808080"/><rect x="631" y="217" width="1" height="18" fill="#808080"/><rect x="700" y="217" width="1" height="18" fill="#808080"/><rect x="569" y="242" width="13" height="13" fill="#008080"/><rect x="570" y="243" width="11" height="11" fill="#ffffff"/><rect x="569" y="262" width="13" height="13" fill="#008080"/><rect x="570" y="263" width="11" height="11" fill="#ffffff"/><rect x="569" y="277" width="13" height="13" fill="#008080"/><rect x="570" y="278" width="11" height="11" fill="#ffffff"/><rect x="569" y="292" width="13" height="13" fill="#008080"/><rect x="570" y="293" width="11" height="11" fill="#ffffff"/><rect x="569" y="307" width="13" height="13" fill="#008080"/><rect x="570" y="308" width="11" height="11" fill="#ffffff"/><rect x="569" y="322" width="13" height="13" fill="#008080"/><rect x="570" y="323" width="11" height="11" fill="#ffffff"/>
<g shape-rendering="auto"><rect x="516" y="223" width="1" height="131" fill="#c8c8c8"/><polyline fill="none" stroke="#000" stroke-width="2.2" points="700,178.5 704,182.5 708,178.5"/><polygon points="570,243 577,243 570,250" fill="#b0b0b0"/><polygon points="570,263 577,263 570,270" fill="#b0b0b0"/><polyline fill="none" stroke="#008000" stroke-width="2.2" points="571.5,267.5 574.5,270.5 579.5,265"/><polygon points="570,278 577,278 570,285" fill="#b0b0b0"/><polyline fill="none" stroke="#008000" stroke-width="2.2" points="571.5,282.5 574.5,285.5 579.5,280"/><polygon points="570,293 577,293 570,300" fill="#b0b0b0"/><polyline fill="none" stroke="#008000" stroke-width="2.2" points="571.5,297.5 574.5,300.5 579.5,295"/><polygon points="570,308 577,308 570,315" fill="#b0b0b0"/><polyline fill="none" stroke="#008000" stroke-width="2.2" points="571.5,312.5 574.5,315.5 579.5,310"/><polygon points="570,323 577,323 570,330" fill="#b0b0b0"/><polyline fill="none" stroke="#008000" stroke-width="2.2" points="571.5,327.5 574.5,330.5 579.5,325"/><rect x="562.5" y="59.5" width="68" height="18" rx="3" fill="#ffffff" stroke="#000080" stroke-width="1.2"/><rect x="564" y="69" width="65" height="7" fill="#c0c0c0"/><rect x="654.5" y="59.5" width="67" height="18" rx="3" fill="#ffffff" stroke="#000080" stroke-width="1.2"/><rect x="656" y="69" width="64" height="7" fill="#c0c0c0"/><path d="M656 61.5H719" stroke="#c00000" stroke-width="1" stroke-dasharray="1,1"/><path d="M656 75.5H719" stroke="#808000" stroke-width="1" stroke-dasharray="1,1"/><path d="M656.5 61V75M718.5 61V75" stroke="#000" stroke-width="1" stroke-dasharray="1,1"/><rect x="611.5" y="5.5" width="21" height="20" rx="3" fill="#ffffff"/><rect x="612" y="6" width="20" height="19" rx="2.5" fill="#007000"/><path d="M614 8H629V10H627V21H622V23H614Z" fill="#00f000"/><path d="M614 8H624L615 16Z" fill="#9a8f9a"/><rect x="615.5" y="10.5" width="5" height="9" fill="#d8d8d8" stroke="#000"/><rect x="620.5" y="12.5" width="6" height="9" fill="#d8d8d8" stroke="#000"/><path d="M622 15h4M622 17h4M616 13h3M616 15h3M616 17h3" stroke="#808080"/><rect x="625" y="19" width="1" height="1" fill="#a000a0"/><rect x="634.5" y="5.5" width="21" height="20" rx="3" fill="#ffffff"/><rect x="635" y="6" width="20" height="19" rx="2.5" fill="#000"/><rect x="636.5" y="7.5" width="17" height="16" rx="1" fill="none" stroke="#007800" stroke-width="2"/><path d="M643 10H648V14H641V12Z" fill="#8a8a8a"/><rect x="642" y="16" width="7" height="1" fill="#8a8a8a"/><rect x="649" y="10" width="1" height="11" fill="#8a8a8a"/><path d="M639 21L641 18V21Z" fill="#8a8a8a"/><rect x="646" y="18" width="2" height="3" fill="#8a8a8a"/><rect x="650" y="21" width="3" height="2" fill="#8a8a8a"/><rect x="671.5" y="5.5" width="20" height="20" rx="3" fill="#c0c0c0" stroke="#808080"/><path d="M674 7H689" stroke="#ffffff"/><rect x="675.5" y="18.5" width="7" height="2" fill="#ffffff" stroke="#000"/><path d="M696 9Q696 6 699 6H711Q714 6 714 9" fill="none" stroke="#ffffff" stroke-width="1.5"/><path d="M695.5 9V11M714.5 9V11" stroke="#ffffff"/><rect x="698.5" y="10.5" width="11" height="10" fill="none" stroke="#909090"/><rect x="699" y="11" width="10" height="2" fill="#909090"/><path d="M694 24H696M713 24H715" stroke="#fff"/><rect x="717.5" y="5.5" width="20" height="20" rx="3" fill="#8a8a8a" stroke="#800000" stroke-width="1.4"/><path d="M719 24H736" stroke="#800080" stroke-width="1.2"/><path d="M722 10l11 11M733 10l-11 11" stroke="#fff" stroke-width="2"/><path d="M722 22l1-1M733 22l-1-1" stroke="#000" stroke-width="1"/></g>
</svg>
<div class="t" style="left:37.00px;top:67.11px;font-size:12.5px;color:#000;transform:scaleX(0.8144);">100</div><div class="t" style="left:43.00px;top:94.11px;font-size:12.5px;color:#000;transform:scaleX(0.7928);">80</div><div class="t" style="left:43.00px;top:120.11px;font-size:12.5px;color:#000;transform:scaleX(0.7928);">60</div><div class="t" style="left:43.00px;top:146.11px;font-size:12.5px;color:#000;transform:scaleX(0.7928);">40</div><div class="t" style="left:43.00px;top:172.11px;font-size:12.5px;color:#000;transform:scaleX(0.7928);">20</div><div class="t" style="left:43.00px;top:217.11px;font-size:12.5px;color:#000;transform:scaleX(0.7928);">50</div><div class="t" style="left:43.00px;top:244.11px;font-size:12.5px;color:#000;transform:scaleX(0.7928);">40</div><div class="t" style="left:43.00px;top:270.11px;font-size:12.5px;color:#000;transform:scaleX(0.7928);">30</div><div class="t" style="left:43.00px;top:296.11px;font-size:12.5px;color:#000;transform:scaleX(0.7928);">20</div><div class="t" style="left:43.00px;top:322.11px;font-size:12.5px;color:#000;transform:scaleX(0.7928);">10</div><div class="t" style="left:533.00px;top:67.11px;font-size:12.5px;color:#000;transform:scaleX(0.7928);">16</div><div class="t" style="left:533.00px;top:82.98px;font-size:12.5px;color:#000;transform:scaleX(0.7928);">14</div><div class="t" style="left:533.00px;top:100.11px;font-size:12.5px;color:#000;transform:scaleX(0.7928);">12</div><div class="t" style="left:533.00px;top:116.11px;font-size:12.5px;color:#000;transform:scaleX(0.7928);">10</div><div class="t" style="left:533.00px;top:132.11px;font-size:12.5px;color:#000;transform:scaleX(0.7143);">8</div><div class="t" style="left:533.00px;top:149.11px;font-size:12.5px;color:#000;transform:scaleX(0.7143);">6</div><div class="t" style="left:533.00px;top:164.98px;font-size:12.5px;color:#000;transform:scaleX(0.7143);">4</div><div class="t" style="left:533.00px;top:182.11px;font-size:12.5px;color:#000;transform:scaleX(0.7143);">2</div><div class="t" style="left:533.00px;top:217.11px;font-size:12.5px;color:#000;transform:scaleX(0.7928);">20</div><div class="t" style="left:533.00px;top:244.11px;font-size:12.5px;color:#000;transform:scaleX(0.7928);">16</div><div class="t" style="left:533.00px;top:270.11px;font-size:12.5px;color:#000;transform:scaleX(0.7928);">12</div><div class="t" style="left:533.00px;top:296.11px;font-size:12.5px;color:#000;transform:scaleX(0.7143);">8</div><div class="t" style="left:533.00px;top:321.98px;font-size:12.5px;color:#000;transform:scaleX(0.7143);">4</div><div class="t" style="left:57.00px;top:207.11px;font-size:12.5px;color:#000;transform:scaleX(0.7482);">0.0</div><div class="t" style="left:57.00px;top:357.11px;font-size:12.5px;color:#000;transform:scaleX(0.7482);">0.0</div><div class="t" style="left:108.00px;top:207.11px;font-size:12.5px;color:#000;transform:scaleX(0.7482);">0.5</div><div class="t" style="left:108.00px;top:357.11px;font-size:12.5px;color:#000;transform:scaleX(0.7482);">0.5</div><div class="t" style="left:160.00px;top:207.11px;font-size:12.5px;color:#000;transform:scaleX(0.7482);">1.0</div><div class="t" style="left:160.00px;top:357.11px;font-size:12.5px;color:#000;transform:scaleX(0.7482);">1.0</div><div class="t" style="left:212.00px;top:206.98px;font-size:12.5px;color:#000;transform:scaleX(0.7482);">1.5</div><div class="t" style="left:212.00px;top:356.98px;font-size:12.5px;color:#000;transform:scaleX(0.7482);">1.5</div><div class="t" style="left:264.00px;top:207.11px;font-size:12.5px;color:#000;transform:scaleX(0.7482);">2.0</div><div class="t" style="left:264.00px;top:357.11px;font-size:12.5px;color:#000;transform:scaleX(0.7482);">2.0</div><div class="t" style="left:316.00px;top:207.11px;font-size:12.5px;color:#000;transform:scaleX(0.7482);">2.5</div><div class="t" style="left:316.00px;top:357.11px;font-size:12.5px;color:#000;transform:scaleX(0.7482);">2.5</div><div class="t" style="left:368.00px;top:207.11px;font-size:12.5px;color:#000;transform:scaleX(0.7482);">3.0</div><div class="t" style="left:368.00px;top:357.11px;font-size:12.5px;color:#000;transform:scaleX(0.7482);">3.0</div><div class="t" style="left:420.00px;top:207.11px;font-size:12.5px;color:#000;transform:scaleX(0.7482);">3.5</div><div class="t" style="left:420.00px;top:357.11px;font-size:12.5px;color:#000;transform:scaleX(0.7482);">3.5</div><div class="t" style="left:472.00px;top:207.11px;font-size:12.5px;color:#000;transform:scaleX(0.7482);">4.0</div><div class="t" style="left:472.00px;top:357.11px;font-size:12.5px;color:#000;transform:scaleX(0.7482);">4.0</div><div class="t" style="left:524.00px;top:206.98px;font-size:12.5px;color:#000;transform:scaleX(0.7482);">4.5</div><div class="t" style="left:524.00px;top:356.98px;font-size:12.5px;color:#000;transform:scaleX(0.7482);">4.5</div><div class="t" style="left:272.00px;top:58.36px;font-size:12.5px;color:#000;transform:scaleX(0.9045);">recorded with BENQ</div><div class="t" style="left:392.00px;top:58.11px;font-size:12.5px;color:#000;transform:scaleX(0.8800);">DVD DD DW1620</div><div class="t" style="left:497.00px;top:58.11px;font-size:12.5px;color:#000;transform:scaleX(0.9031);">vB7V9</div><div class="t" style="left:7.20px;top:11.45px;font-size:11.8px;font-weight:bold;color:#000;transform:scaleX(1.1815);">CD Speed : Disc Quality Test - BENQ</div><div class="t" style="left:272.60px;top:11.21px;font-size:11.8px;font-weight:bold;color:#000;transform:scaleX(1.1112);">DVD DD DW1620</div><div class="t" style="left:400.00px;top:11.21px;font-size:11.8px;font-weight:bold;color:#000;transform:scaleX(1.0678);">B7V9</div><div class="t" style="left:22.50px;top:39.36px;font-size:12.5px;color:#000;transform:scaleX(0.9231);">Disc Quality</div><div class="t" style="left:40.60px;top:368.98px;font-size:12.5px;color:#000;transform:scaleX(0.8792);">PI Errors</div><div class="t" style="left:220.70px;top:369.36px;font-size:12.5px;color:#000;transform:scaleX(0.8921);">PI Failures</div><div class="t" style="left:402.00px;top:369.36px;font-size:12.5px;color:#000;transform:scaleX(0.9696);">Jitter</div><div class="t j" style="left:27.00px;top:383.56px;font-size:12px;color:#000;transform:scaleX(0.9466);">平均:</div><div class="t j" style="left:27.00px;top:402.80px;font-size:12px;color:#000;transform:scaleX(0.9466);">最大:</div><div class="t j" style="left:27.00px;top:419.92px;font-size:12px;color:#000;transform:scaleX(0.9513);">合計 :</div><div class="t" style="left:150.20px;top:383.11px;font-size:12.5px;color:#000080;transform:scaleX(0.8000);">12.54</div><div class="t" style="left:164.20px;top:401.11px;font-size:12.5px;color:#000080;transform:scaleX(0.7928);">58</div><div class="t" style="left:140.20px;top:419.11px;font-size:12.5px;color:#000080;transform:scaleX(0.8383);">162182</div><div class="t j" style="left:208.40px;top:383.56px;font-size:12px;color:#000;transform:scaleX(0.9466);">平均:</div><div class="t j" style="left:208.40px;top:402.80px;font-size:12px;color:#000;transform:scaleX(0.9466);">最大:</div><div class="t j" style="left:208.40px;top:419.92px;font-size:12px;color:#000;transform:scaleX(0.9513);">合計 :</div><div class="t" style="left:338.50px;top:383.11px;font-size:12.5px;color:#000080;transform:scaleX(0.7795);">0.50</div><div class="t" style="left:346.50px;top:401.11px;font-size:12.5px;color:#000080;transform:scaleX(0.7928);">27</div><div class="t" style="left:334.50px;top:419.11px;font-size:12.5px;color:#000080;transform:scaleX(0.8288);">6454</div><div class="t j" style="left:389.20px;top:383.56px;font-size:12px;color:#000;transform:scaleX(0.9174);">平均:</div><div class="t j" style="left:389.20px;top:402.80px;font-size:12px;color:#000;transform:scaleX(0.9174);">最大:</div><div class="t" style="left:508.00px;top:384.11px;font-size:12.5px;color:#000080;transform:scaleX(0.7717);">7.94 %</div><div class="t" style="left:507.00px;top:402.11px;font-size:12.5px;color:#000080;transform:scaleX(0.7974);">13.3 %</div><div class="t" style="left:389.60px;top:424.36px;font-size:12.5px;color:#000;transform:scaleX(0.8662);">PO Failures:</div><div class="t" style="left:518.60px;top:423.98px;font-size:12.5px;color:#000080;transform:scaleX(0.8144);">141</div><div class="t j" style="left:570.00px;top:82.68px;font-size:12px;color:#0000ff;transform:scaleX(0.7932);">ディスク情報</div><div class="t" style="left:569.00px;top:156.36px;font-size:12.5px;color:#0000ff;transform:scaleX(0.9307);">Settings</div><div class="t j" style="left:569.00px;top:95.04px;font-size:12px;color:#000;transform:scaleX(0.6716);">タイプ:</div><div class="t" style="left:617.30px;top:95.98px;font-size:12.5px;color:#000080;transform:scaleX(0.9438);">DVD-R</div><div class="t" style="left:569.00px;top:110.98px;font-size:12.5px;color:#000;transform:scaleX(0.7750);">ID:</div><div class="t" style="left:617.30px;top:111.11px;font-size:12.5px;color:#000080;transform:scaleX(0.8510);">ME 153</div><div class="t j" style="left:569.00px;top:124.44px;font-size:12px;color:#000;transform:scaleX(0.9284);">日付:</div><div class="t" style="left:616.70px;top:125.11px;font-size:12.5px;color:#000080;transform:scaleX(0.8872);">30 May 2005</div><div class="t" style="left:569.60px;top:140.36px;font-size:12.5px;color:#000;transform:scaleX(0.8176);">Label:</div><div class="t" style="left:616.70px;top:140.11px;font-size:12.5px;color:#000080;transform:scaleX(0.8309);">CDS_TEST_B2</div><div class="t j" style="left:568.60px;top:174.04px;font-size:12px;color:#000;transform:scaleX(0.9833);">転送速度</div><div class="t j" style="left:568.60px;top:198.44px;font-size:12px;color:#000;transform:scaleX(0.9583);">開始</div><div class="t j" style="left:568.72px;top:220.56px;font-size:12px;color:#000;transform:scaleX(0.9809);">終了位置</div><div class="t j" style="left:634.40px;top:174.80px;font-size:12px;color:#000;">最大</div><div class="t" style="left:633.60px;top:198.11px;font-size:12.5px;color:#000;transform:scaleX(0.8840);">0000 MB</div><div class="t" style="left:633.60px;top:221.11px;font-size:12.5px;color:#000;transform:scaleX(0.8840);">4489 MB</div><div class="t" style="left:585.10px;top:244.36px;font-size:12.5px;color:#000;transform:scaleX(0.8939);">Quick Scan</div><div class="t" style="left:585.10px;top:263.36px;font-size:12.5px;color:#000;transform:scaleX(0.8968);">Show C1/PIE</div><div class="t" style="left:585.10px;top:278.36px;font-size:12.5px;color:#000;transform:scaleX(0.9059);">Show C2/PIF</div><div class="t" style="left:585.10px;top:293.36px;font-size:12.5px;color:#000;transform:scaleX(0.9341);">Show Jitter</div><div class="t" style="left:585.10px;top:307.36px;font-size:12.5px;color:#000;transform:scaleX(0.8729);">Show Read Speed</div><div class="t" style="left:585.10px;top:322.36px;font-size:12.5px;color:#000;transform:scaleX(0.8814);">Show Write Speed</div><div class="t j" style="left:569.00px;top:350.92px;font-size:12px;color:#000;transform:scaleX(0.7943);">品質スコア:</div><div class="t" style="left:701.00px;top:351.11px;font-size:12.5px;color:#000080;transform:scaleX(0.7143);">0</div><div class="t j" style="left:569.00px;top:382.68px;font-size:12px;color:#000;transform:scaleX(0.9735);">進行状況:</div><div class="t" style="left:678.40px;top:383.11px;font-size:12.5px;color:#000080;transform:scaleX(0.8085);">100 %</div><div class="t j" style="left:569.00px;top:401.20px;font-size:12px;color:#000;transform:scaleX(0.7102);">ポジション:</div><div class="t" style="left:662.00px;top:401.11px;font-size:12.5px;color:#000080;transform:scaleX(0.8900);">4488 MB</div><div class="t j" style="left:569.00px;top:419.04px;font-size:12px;color:#000;transform:scaleX(0.9503);">速度:</div><div class="t" style="left:676.40px;top:419.11px;font-size:12.5px;color:#000080;transform:scaleX(0.8747);">8.33 X</div><div class="t j" style="left:583.60px;top:61.44px;font-size:12px;color:#000;transform:scaleX(0.9750);">開始</div><div class="t j" style="left:667.81px;top:61.56px;font-size:12px;color:#000;transform:scaleX(0.9556);">終了(<u>X</u>)</div>
</body></html>
